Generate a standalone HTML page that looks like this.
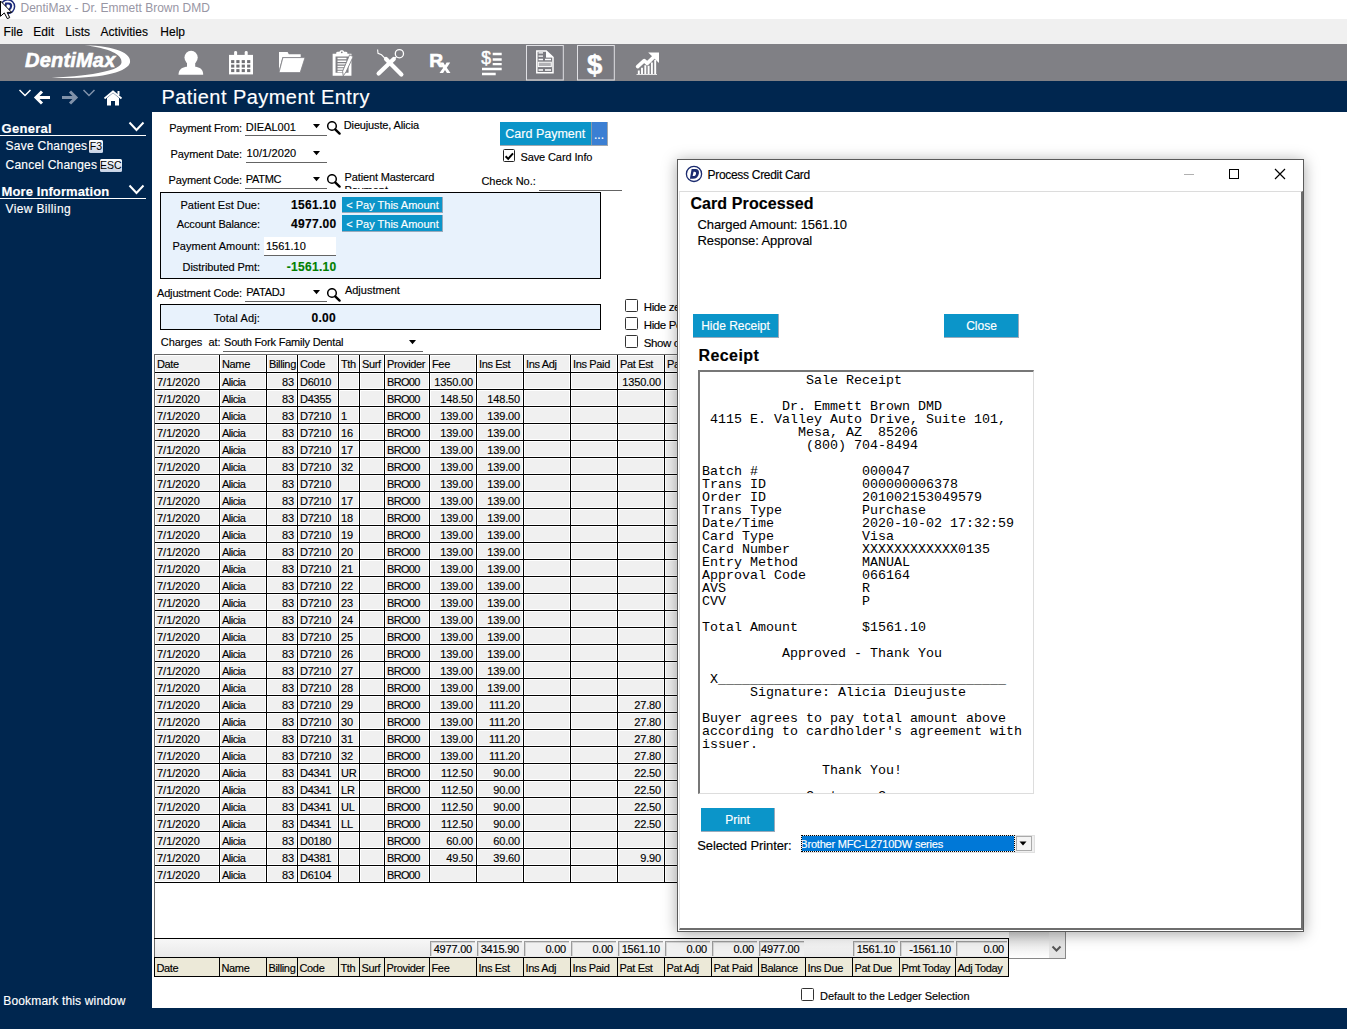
<!DOCTYPE html>
<html><head><meta charset="utf-8"><title>DentiMax</title>
<style>
html,body{margin:0;padding:0}
body{width:1347px;height:1029px;overflow:hidden;position:relative;background:#00264f;font-family:"Liberation Sans",sans-serif}
.r{position:absolute}
.t{position:absolute;white-space:nowrap;-webkit-text-stroke:0.15px currentColor}
.c{position:absolute;background:#f0f0f0;border:1px solid #fff}
.sunk{position:absolute;background:#f0f0f0;border-top:1px solid #9c9c9c;border-left:1px solid #9c9c9c;box-shadow:inset 1px 1px 0 #d4d4d4;box-sizing:border-box}
.badge{font-family:"Liberation Sans",sans-serif;font-size:10.5px;line-height:13px;text-align:center;color:#000;background:linear-gradient(#fdfdfd,#c6d2e6);border-radius:1.5px}
</style></head><body>
<div class="r" style="left:0px;top:0px;width:1347px;height:19px;background:#fff"></div>
<div class="t" style="left:20.5px;top:0.50px;font-size:12px;line-height:15px;color:#9896a4;font-weight:normal;font-family:'Liberation Sans', sans-serif;-webkit-text-stroke:0;">DentiMax - Dr. Emmett Brown DMD</div>
<svg class="r" style="left:0;top:0" width="20" height="20" viewBox="0 0 20 20"><circle cx="7.8" cy="6.6" r="6.8" fill="#fff" stroke="#1c2a7a" stroke-width="1.5"/><path d="M5.2 2.4 h3.6 c2.6 0 3.8 1.8 3.3 4.2 -.5 2.8 -2.4 4.6 -5.2 4.6 H3.4 z M6.9 4.6 L5.8 9.1 h1.4 c1.4 0 2.4-1 2.7-2.4 .3-1.3-.4-2.1-1.7-2.1z" fill="#1c2a7a" fill-rule="evenodd"/><path d="M0.5 1 L0.5 16.3 L4.3 12.9 L7.3 18.6 L9.7 17.6 L7.2 12.4 L11.7 12.4 Z" fill="#fff" stroke="#000" stroke-width="1"/></svg>
<div class="r" style="left:0px;top:19px;width:1347px;height:25px;background:#f0f0f0"></div>
<div class="t" style="left:3.6px;top:24.50px;font-size:12px;line-height:15px;color:#000;font-weight:normal;font-family:'Liberation Sans', sans-serif;">File</div>
<div class="t" style="left:33.3px;top:24.50px;font-size:12px;line-height:15px;color:#000;font-weight:normal;font-family:'Liberation Sans', sans-serif;">Edit</div>
<div class="t" style="left:65.3px;top:24.50px;font-size:12px;line-height:15px;color:#000;font-weight:normal;font-family:'Liberation Sans', sans-serif;">Lists</div>
<div class="t" style="left:100.6px;top:24.50px;font-size:12px;line-height:15px;color:#000;font-weight:normal;font-family:'Liberation Sans', sans-serif;">Activities</div>
<div class="t" style="left:160.3px;top:24.50px;font-size:12px;line-height:15px;color:#000;font-weight:normal;font-family:'Liberation Sans', sans-serif;">Help</div>
<div class="r" style="left:0px;top:44px;width:1347px;height:37px;background:#808085"></div>
<svg class="r" style="left:20px;top:44px" width="120" height="37" viewBox="0 0 120 37"><path d="M64.5 1.2 C 96 2, 112 9.5, 110 18.5 C 108 28, 80 35.5, 31.7 33.8 C 76 31.5, 100.5 26, 101.5 18.5 C 102.5 10.5, 89 4, 64.5 1.2 Z" fill="#fff"/></svg>
<div class="t" style="left:25px;top:47.50px;font-size:20px;line-height:25px;color:#fff;font-weight:bold;font-family:'Liberation Sans', sans-serif;letter-spacing:0.2px;font-style:italic;-webkit-text-stroke:0.6px #fff;">DentiMax</div>
<svg class="r" style="left:0;top:0" width="700" height="85" viewBox="0 0 700 85"><ellipse cx="191.1" cy="57.6" rx="6.6" ry="6.9" fill="#fff"/><rect x="187" y="62" width="8.2" height="5" fill="#fff"/><path d="M178.5 74.7 C178.6 70 181.5 67.6 186 66.8 L196 66.8 C200.5 67.6 203.2 70 203.2 74.7 Z" fill="#fff"/><rect x="229" y="54.9" width="24" height="19.5" fill="#fff"/><rect x="234.1" y="51" width="3" height="5" rx="1.4" fill="#fff"/><rect x="244.7" y="51" width="3" height="5" rx="1.4" fill="#fff"/><rect x="231.1" y="60.1" width="3.2" height="3" fill="#707075"/><rect x="236.3" y="60.1" width="3.2" height="3" fill="#707075"/><rect x="241.7" y="60.1" width="3.2" height="3" fill="#707075"/><rect x="247.1" y="60.1" width="3.2" height="3" fill="#707075"/><rect x="231.1" y="64.6" width="3.2" height="3" fill="#707075"/><rect x="236.3" y="64.6" width="3.2" height="3" fill="#707075"/><rect x="241.7" y="64.6" width="3.2" height="3" fill="#707075"/><rect x="247.1" y="64.6" width="3.2" height="3" fill="#707075"/><rect x="231.1" y="69.1" width="3.2" height="3" fill="#707075"/><rect x="236.3" y="69.1" width="3.2" height="3" fill="#707075"/><rect x="241.7" y="69.1" width="3.2" height="3" fill="#707075"/><rect x="247.1" y="69.1" width="3.2" height="3" fill="#707075"/><path d="M279 52 H287.6 L288.8 54.3 H300.7 V57 H282.5 L279 70 Z" fill="#fff"/><path d="M282.9 57.6 H305 L300.2 72.6 H279 Z" fill="#fff" stroke="#808085" stroke-width="0.8"/><path d="M334.1 55.1 H350 V74.3 H334.1 Z" fill="none" stroke="#fff" stroke-width="2.9"/><path d="M336.2 55.8 V53 C336.2 51.8 337.4 51.8 338.5 51.8 H339.5 C340 50.5 340.8 50.2 341.8 50.2 C342.8 50.2 343.6 50.5 344.1 51.8 H345.2 C346.3 51.8 347.4 51.8 347.4 53 V55.8 Z" fill="#fff"/><circle cx="341.8" cy="52.3" r="0.9" fill="#808085"/><path d="M337.5 58.5 H346.5 M337.5 61.2 H346.5 M337.5 63.9 H346.5 M337.5 66.5 H346 M337.5 69 H344.5 M337.5 71.5 H343" stroke="#fff" stroke-width="1.4"/><path d="M349.6 54.8 L353.2 56.6 L346 72 L343.2 75.8 L342.6 71.2 Z" fill="#fff" stroke="#808085" stroke-width="0.9"/><path d="M378.6 73.6 L393.8 58.9" stroke="#fff" stroke-width="4.2" stroke-linecap="round"/><path d="M393 59.6 L396.6 56.6" stroke="#fff" stroke-width="1.1"/><circle cx="399.4" cy="53.7" r="4.1" fill="none" stroke="#fff" stroke-width="1.3"/><path d="M386 59 L401.4 74.4" stroke="#fff" stroke-width="4.2" stroke-linecap="round"/><path d="M385.6 58.8 L381.5 54.8 L378 53.3 L377.6 49.5" stroke="#fff" stroke-width="1.1" fill="none"/><text x="429.2" y="66.8" font-family="Liberation Sans" font-weight="bold" font-size="19.2" fill="#fff" stroke="#fff" stroke-width="0.6">R</text><path d="M439.8 62.6 H443.4 L445 65.3 L446.6 62.6 H450.2 L446.8 67.8 L450.5 73 H446.9 L445 70.1 L443.1 73 H439.5 L443.2 67.8 Z" fill="#fff"/><text x="481.2" y="64.2" font-family="Liberation Sans" font-size="17.5" fill="#fff" stroke="#fff" stroke-width="0.5">$</text><path d="M492.7 54 H501.7 M492.7 59.5 H501.7 M492.7 64.2 H501.7 M482 69 H501.7 M482 74 H495.7" stroke="#fff" stroke-width="2.3"/><rect x="526.5" y="45.5" width="36.8" height="34.5" fill="#7a7a80" stroke="#e0e0e4" stroke-width="1"/><path d="M536.8 51 H546.2 L553 57.3 V72.7 H536.8 Z" fill="none" stroke="#fff" stroke-width="1.5"/><path d="M546 51 V57.5 H553" fill="#fff"/><path d="M546.2 51 L553 57.3 H546.2 Z" fill="#fff"/><path d="M538.5 52.9 H543 M538.5 56.2 H543 M538.5 59.5 H543 M545 59.5 H551 M538.5 70 H543 M545 70 H551" stroke="#fff" stroke-width="1.3"/><rect x="538.3" y="62.2" width="13" height="4.4" fill="#b0b0b4" stroke="#fff" stroke-width="1"/><rect x="577.5" y="45.5" width="36.8" height="34.5" fill="#7a7a80" stroke="#e0e0e4" stroke-width="1"/><text x="587.1" y="74" font-family="Liberation Sans" font-weight="bold" font-size="27.5" fill="#fff" stroke="#fff" stroke-width="0.5">$</text><path d="M637.6 66.6 L644.2 60.6 L647.2 63.4 L655.5 55.3" stroke="#fff" stroke-width="3.6" fill="none" stroke-linecap="round" stroke-linejoin="round"/><path d="M648.2 52.4 H659 V63 Z" fill="#fff"/><path d="M638.8 74 V70.5 M642 74 V67.8 M645.3 74 V65.3 M648.6 74 V65.8 M651.9 74 V62.6 M655.2 74 V59.8" stroke="#fff" stroke-width="1.9"/><path d="M636.5 74.5 H657" stroke="#fff" stroke-width="0.8"/></svg>
<svg class="r" style="left:0;top:82px" width="152" height="28" viewBox="0 82 152 28"><path d="M19.5 90 L25 95.5 L30.5 90" stroke="#fff" stroke-width="1.5" fill="none"/><path d="M50 97.5 H37 M42 91.5 L36 97.5 L42 103.5" stroke="#fff" stroke-width="3" fill="none"/><path d="M62 97.5 H75 M70 91.5 L76 97.5 L70 103.5" stroke="#8092aa" stroke-width="3" fill="none"/><path d="M83.5 90 L89 95.5 L94.5 90" stroke="#8092aa" stroke-width="1.5" fill="none"/><path d="M104.5 98.5 L113 91.5 L121.5 98.5" stroke="#fff" stroke-width="1.8" fill="none"/><path d="M107 98 L113 93 L119 98 V105.5 H115 V101 H111 V105.5 H107 Z" fill="#fff"/><rect x="117.5" y="91" width="2" height="4" fill="#fff"/></svg>
<div class="t" style="left:161.5px;top:85.20px;font-size:20px;line-height:25px;color:#fff;font-weight:normal;font-family:'Liberation Sans', sans-serif;letter-spacing:0.45px;">Patient Payment Entry</div>
<div class="t" style="left:1.5px;top:120.00px;font-size:13px;line-height:17px;color:#fff;font-weight:bold;font-family:'Liberation Sans', sans-serif;letter-spacing:0.3px;">General</div>
<div class="r" style="left:0px;top:135px;width:146px;height:1.2px;background:#fff"></div>
<svg class="r" style="left:128px;top:120px" width="20" height="14"><path d="M1.5 2.5 L8.5 10 L15.5 2.5" stroke="#fff" stroke-width="2" fill="none"/></svg>
<div class="t" style="left:5.6px;top:138.50px;font-size:12px;line-height:15px;color:#fff;font-weight:normal;font-family:'Liberation Sans', sans-serif;letter-spacing:0.25px;">Save Changes</div>
<div class="r badge" style="left:89px;top:139.5px;width:14px;height:13px">F3</div>
<div class="t" style="left:5.6px;top:157.50px;font-size:12px;line-height:15px;color:#fff;font-weight:normal;font-family:'Liberation Sans', sans-serif;letter-spacing:0.2px;">Cancel Changes</div>
<div class="r badge" style="left:99.5px;top:158.5px;width:22.5px;height:13px">ESC</div>
<div class="t" style="left:1.5px;top:183.00px;font-size:13px;line-height:17px;color:#fff;font-weight:bold;font-family:'Liberation Sans', sans-serif;letter-spacing:0.1px;">More Information</div>
<div class="r" style="left:0px;top:198px;width:146px;height:1.2px;background:#fff"></div>
<svg class="r" style="left:128px;top:183px" width="20" height="14"><path d="M1.5 2.5 L8.5 10 L15.5 2.5" stroke="#fff" stroke-width="2" fill="none"/></svg>
<div class="t" style="left:5.6px;top:201.50px;font-size:12px;line-height:15px;color:#fff;font-weight:normal;font-family:'Liberation Sans', sans-serif;letter-spacing:0.35px;">View Billing</div>
<div class="t" style="left:3.3px;top:993.50px;font-size:12px;line-height:15px;color:#fff;font-weight:normal;font-family:'Liberation Sans', sans-serif;letter-spacing:0.15px;">Bookmark this window</div>
<div class="r" style="left:152px;top:112px;width:1195px;height:896px;background:#fff"></div>
<div class="t" style="right:1105.2px;top:121.00px;font-size:11px;line-height:14px;color:#000;font-weight:normal;font-family:'Liberation Sans', sans-serif;letter-spacing:-0.2px;">Payment From:</div>
<div class="t" style="left:245.8px;top:120.00px;font-size:11px;line-height:14px;color:#000;font-weight:normal;font-family:'Liberation Sans', sans-serif;">DIEAL001</div>
<div class="r" style="left:244.8px;top:135px;width:82.19999999999999px;height:1px;background:#646464"></div>
<svg class="r" style="left:313px;top:124px" width="8" height="5"><path d="M0 0 H7 L3.5 4.2 Z" fill="#000"/></svg>
<svg class="r" style="left:327px;top:121px" width="15" height="15"><circle cx="5" cy="5" r="4.3" fill="none" stroke="#000" stroke-width="1.5"/><path d="M8.2 8.4 L12.6 12.6" stroke="#000" stroke-width="2.4" stroke-linecap="round"/></svg>
<div class="t" style="left:343.8px;top:118.00px;font-size:11px;line-height:14px;color:#000;font-weight:normal;font-family:'Liberation Sans', sans-serif;letter-spacing:-0.15px;">Dieujuste, Alicia</div>
<div class="t" style="right:1105px;top:147.00px;font-size:11px;line-height:14px;color:#000;font-weight:normal;font-family:'Liberation Sans', sans-serif;letter-spacing:-0.1px;">Payment Date:</div>
<div class="t" style="left:246.5px;top:146.00px;font-size:11px;line-height:14px;color:#000;font-weight:normal;font-family:'Liberation Sans', sans-serif;letter-spacing:0.1px;">10/1/2020</div>
<div class="r" style="left:245.5px;top:161.5px;width:81.5px;height:1px;background:#646464"></div>
<svg class="r" style="left:313px;top:151px" width="8" height="5"><path d="M0 0 H7 L3.5 4.2 Z" fill="#000"/></svg>
<div class="t" style="right:1105.2px;top:173.00px;font-size:11px;line-height:14px;color:#000;font-weight:normal;font-family:'Liberation Sans', sans-serif;letter-spacing:-0.2px;">Payment Code:</div>
<div class="t" style="left:245.8px;top:172.00px;font-size:11px;line-height:14px;color:#000;font-weight:normal;font-family:'Liberation Sans', sans-serif;letter-spacing:-0.3px;">PATMC</div>
<div class="r" style="left:244.8px;top:187.5px;width:82.19999999999999px;height:1px;background:#646464"></div>
<svg class="r" style="left:313px;top:177px" width="8" height="5"><path d="M0 0 H7 L3.5 4.2 Z" fill="#000"/></svg>
<svg class="r" style="left:327px;top:174px" width="15" height="15"><circle cx="5" cy="5" r="4.3" fill="none" stroke="#000" stroke-width="1.5"/><path d="M8.2 8.4 L12.6 12.6" stroke="#000" stroke-width="2.4" stroke-linecap="round"/></svg>
<div class="r" style="left:344px;top:170px;width:120px;height:18.6px;overflow:hidden">
<div class="t" style="left:0.6px;top:-0.50px;font-size:11px;line-height:14px;color:#000;font-weight:normal;font-family:'Liberation Sans', sans-serif;letter-spacing:-0.15px;">Patient Mastercard</div>
<div class="t" style="left:0.6px;top:12.80px;font-size:11px;line-height:14px;color:#000;font-weight:normal;font-family:'Liberation Sans', sans-serif;">Payment</div>
</div>
<div class="r" style="left:499.7px;top:122px;width:91.3px;height:23.4px;background:#0b95c9"></div>
<div class="r" style="left:591px;top:122px;width:16.3px;height:23.4px;background:#3b7fd3"></div>
<div class="t" style="left:545.3px;transform:translateX(-50%);top:125.80px;font-size:12.5px;line-height:16px;color:#fff;font-weight:normal;font-family:'Liberation Sans', sans-serif;">Card Payment</div>
<div class="r" style="left:591px;top:122px;width:1px;height:23.4px;background:#8a9aa8"></div>
<div class="r" style="left:499.7px;top:145px;width:108px;height:1px;background:#a0a8b0"></div>
<div class="r" style="left:607px;top:122px;width:1px;height:24px;background:#a0a8b0"></div>
<div class="t" style="left:599px;transform:translateX(-50%);top:127.50px;font-size:12px;line-height:15px;color:#fff;font-weight:normal;font-family:'Liberation Sans', sans-serif;">...</div>
<div class="r" style="left:502.5px;top:149.3px;width:10.6px;height:10.6px;border:1.3px solid #222;border-radius:1.5px;background:#fff"></div>
<svg class="r" style="left:503px;top:150px" width="12" height="12"><path d="M2.6 6.3 L5.2 8.9 L10 3.4" stroke="#000" stroke-width="2" fill="none"/></svg>
<div class="t" style="left:520.4px;top:150.00px;font-size:11px;line-height:14px;color:#000;font-weight:normal;font-family:'Liberation Sans', sans-serif;letter-spacing:-0.1px;">Save Card Info</div>
<div class="t" style="left:481.4px;top:173.50px;font-size:11px;line-height:14px;color:#000;font-weight:normal;font-family:'Liberation Sans', sans-serif;">Check No.:</div>
<div class="r" style="left:539.4px;top:190px;width:82.4px;height:1px;background:#646464"></div>
<div class="r" style="left:160px;top:192px;width:439px;height:85px;border:1px solid #000;background:#e8f2fc"></div>
<div class="t" style="right:1087px;top:198.00px;font-size:11px;line-height:14px;color:#000;font-weight:normal;font-family:'Liberation Sans', sans-serif;letter-spacing:0px;">Patient Est Due:</div>
<div class="t" style="right:1087px;top:217.00px;font-size:11px;line-height:14px;color:#000;font-weight:normal;font-family:'Liberation Sans', sans-serif;letter-spacing:-0.15px;">Account Balance:</div>
<div class="t" style="right:1087px;top:239.00px;font-size:11px;line-height:14px;color:#000;font-weight:normal;font-family:'Liberation Sans', sans-serif;letter-spacing:0.05px;">Payment Amount:</div>
<div class="t" style="right:1087px;top:260.00px;font-size:11px;line-height:14px;color:#000;font-weight:normal;font-family:'Liberation Sans', sans-serif;letter-spacing:-0.05px;">Distributed Pmt:</div>
<div class="t" style="right:1010.5px;top:198.00px;font-size:12px;line-height:15px;color:#000;font-weight:bold;font-family:'Liberation Sans', sans-serif;letter-spacing:0.3px;">1561.10</div>
<div class="t" style="right:1010.5px;top:217.00px;font-size:12px;line-height:15px;color:#000;font-weight:bold;font-family:'Liberation Sans', sans-serif;letter-spacing:0.3px;">4977.00</div>
<div class="t" style="right:1010.5px;top:260.00px;font-size:12px;line-height:15px;color:#008000;font-weight:bold;font-family:'Liberation Sans', sans-serif;letter-spacing:0.3px;">-1561.10</div>
<div class="r" style="left:264px;top:237.3px;width:71.8px;height:18.5px;background:#fff;border-bottom:1px solid #646464;box-sizing:border-box"></div>
<div class="t" style="left:266px;top:239.00px;font-size:11px;line-height:14px;color:#000;font-weight:normal;font-family:'Liberation Sans', sans-serif;">1561.10</div>
<div class="r" style="left:341.6px;top:196.6px;width:101.8px;height:16.5px;background:#0b95c9;border-right:1px solid #9ab;border-bottom:1px solid #9ab;box-sizing:border-box"></div>
<div class="t" style="left:392.5px;transform:translateX(-50%);top:198.10px;font-size:11px;line-height:14px;color:#fff;font-weight:normal;font-family:'Liberation Sans', sans-serif;">&lt; Pay This Amount</div>
<div class="r" style="left:341.6px;top:215px;width:101.8px;height:16.5px;background:#0b95c9;border-right:1px solid #9ab;border-bottom:1px solid #9ab;box-sizing:border-box"></div>
<div class="t" style="left:392.5px;transform:translateX(-50%);top:216.50px;font-size:11px;line-height:14px;color:#fff;font-weight:normal;font-family:'Liberation Sans', sans-serif;">&lt; Pay This Amount</div>
<div class="t" style="right:1105px;top:285.50px;font-size:11px;line-height:14px;color:#000;font-weight:normal;font-family:'Liberation Sans', sans-serif;letter-spacing:-0.15px;">Adjustment Code:</div>
<div class="t" style="left:246.3px;top:284.50px;font-size:11px;line-height:14px;color:#000;font-weight:normal;font-family:'Liberation Sans', sans-serif;letter-spacing:-0.2px;">PATADJ</div>
<div class="r" style="left:245.3px;top:300.5px;width:81.69999999999999px;height:1px;background:#646464"></div>
<svg class="r" style="left:312.6px;top:290px" width="8" height="5"><path d="M0 0 H7 L3.5 4.2 Z" fill="#000"/></svg>
<svg class="r" style="left:327px;top:288px" width="15" height="15"><circle cx="5" cy="5" r="4.3" fill="none" stroke="#000" stroke-width="1.5"/><path d="M8.2 8.4 L12.6 12.6" stroke="#000" stroke-width="2.4" stroke-linecap="round"/></svg>
<div class="t" style="left:344.9px;top:283.00px;font-size:11px;line-height:14px;color:#000;font-weight:normal;font-family:'Liberation Sans', sans-serif;">Adjustment</div>
<div class="r" style="left:160px;top:304px;width:439px;height:24px;border:1px solid #000;background:#e8f2fc"></div>
<div class="t" style="right:1087px;top:310.50px;font-size:11px;line-height:14px;color:#000;font-weight:normal;font-family:'Liberation Sans', sans-serif;letter-spacing:0.15px;">Total Adj:</div>
<div class="t" style="right:1011px;top:310.50px;font-size:12px;line-height:15px;color:#000;font-weight:bold;font-family:'Liberation Sans', sans-serif;letter-spacing:0.3px;">0.00</div>
<div class="t" style="left:160.7px;top:334.50px;font-size:11px;line-height:14px;color:#000;font-weight:normal;font-family:'Liberation Sans', sans-serif;">Charges&nbsp; at:</div>
<div class="t" style="left:224px;top:334.50px;font-size:11px;line-height:14px;color:#000;font-weight:normal;font-family:'Liberation Sans', sans-serif;letter-spacing:-0.2px;">South Fork Family Dental</div>
<div class="r" style="left:223px;top:351px;width:199.8px;height:1px;background:#646464"></div>
<svg class="r" style="left:409px;top:340px" width="8" height="5"><path d="M0 0 H7 L3.5 4.2 Z" fill="#000"/></svg>
<div class="r" style="left:625.2px;top:299.3px;width:10.6px;height:10.6px;border:1.3px solid #333;border-radius:1.5px;background:#fff"></div>
<div class="t" style="left:643.8px;top:299.80px;font-size:11.5px;line-height:15px;color:#000;font-weight:normal;font-family:'Liberation Sans', sans-serif;letter-spacing:-0.4px;">Hide zero</div>
<div class="r" style="left:625.2px;top:317.3px;width:10.6px;height:10.6px;border:1.3px solid #333;border-radius:1.5px;background:#fff"></div>
<div class="t" style="left:643.8px;top:317.80px;font-size:11.5px;line-height:15px;color:#000;font-weight:normal;font-family:'Liberation Sans', sans-serif;letter-spacing:-0.4px;">Hide Pe</div>
<div class="r" style="left:625.2px;top:335.3px;width:10.6px;height:10.6px;border:1.3px solid #333;border-radius:1.5px;background:#fff"></div>
<div class="t" style="left:643.8px;top:335.80px;font-size:11.5px;line-height:15px;color:#000;font-weight:normal;font-family:'Liberation Sans', sans-serif;letter-spacing:-0.4px;">Show o</div>
<div class="r" style="left:154px;top:354px;width:895px;height:585px;background:#fff;border-left:1px solid #6a6a6a;border-top:1px solid #6a6a6a;box-sizing:border-box"></div>
<div class="r" style="left:154px;top:354px;width:855px;height:529px;background:#000"></div>
<div class="r" style="left:154px;top:354px;width:855px;height:1px;background:#6a6a6a"></div>
<div class="r" style="left:154px;top:354px;width:1px;height:529px;background:#6a6a6a"></div>
<div class="c" style="left:155px;top:355px;width:62px;height:15px"></div><div class="c" style="left:220px;top:355px;width:44px;height:15px"></div><div class="c" style="left:267px;top:355px;width:28px;height:15px"></div><div class="c" style="left:298px;top:355px;width:38px;height:15px"></div><div class="c" style="left:339px;top:355px;width:18px;height:15px"></div><div class="c" style="left:360px;top:355px;width:22px;height:15px"></div><div class="c" style="left:385px;top:355px;width:42px;height:15px"></div><div class="c" style="left:430px;top:355px;width:44px;height:15px"></div><div class="c" style="left:477px;top:355px;width:44px;height:15px"></div><div class="c" style="left:524px;top:355px;width:44px;height:15px"></div><div class="c" style="left:571px;top:355px;width:44px;height:15px"></div><div class="c" style="left:618px;top:355px;width:44px;height:15px"></div><div class="c" style="left:665px;top:355px;width:44px;height:15px"></div><div class="c" style="left:712px;top:355px;width:44px;height:15px"></div><div class="c" style="left:759px;top:355px;width:44px;height:15px"></div><div class="c" style="left:806px;top:355px;width:44px;height:15px"></div><div class="c" style="left:853px;top:355px;width:44px;height:15px"></div><div class="c" style="left:900px;top:355px;width:53px;height:15px"></div><div class="c" style="left:956px;top:355px;width:50px;height:15px"></div>
<div class="c" style="left:155px;top:373px;width:62px;height:14px"></div><div class="c" style="left:220px;top:373px;width:44px;height:14px"></div><div class="c" style="left:267px;top:373px;width:28px;height:14px"></div><div class="c" style="left:298px;top:373px;width:38px;height:14px"></div><div class="c" style="left:339px;top:373px;width:18px;height:14px"></div><div class="c" style="left:360px;top:373px;width:22px;height:14px"></div><div class="c" style="left:385px;top:373px;width:42px;height:14px"></div><div class="c" style="left:430px;top:373px;width:44px;height:14px"></div><div class="c" style="left:477px;top:373px;width:44px;height:14px"></div><div class="c" style="left:524px;top:373px;width:44px;height:14px"></div><div class="c" style="left:571px;top:373px;width:44px;height:14px"></div><div class="c" style="left:618px;top:373px;width:44px;height:14px"></div><div class="c" style="left:665px;top:373px;width:44px;height:14px"></div><div class="c" style="left:712px;top:373px;width:44px;height:14px"></div><div class="c" style="left:759px;top:373px;width:44px;height:14px"></div><div class="c" style="left:806px;top:373px;width:44px;height:14px"></div><div class="c" style="left:853px;top:373px;width:44px;height:14px"></div><div class="c" style="left:900px;top:373px;width:53px;height:14px"></div><div class="c" style="left:956px;top:373px;width:50px;height:14px"></div>
<div class="c" style="left:155px;top:390px;width:62px;height:14px"></div><div class="c" style="left:220px;top:390px;width:44px;height:14px"></div><div class="c" style="left:267px;top:390px;width:28px;height:14px"></div><div class="c" style="left:298px;top:390px;width:38px;height:14px"></div><div class="c" style="left:339px;top:390px;width:18px;height:14px"></div><div class="c" style="left:360px;top:390px;width:22px;height:14px"></div><div class="c" style="left:385px;top:390px;width:42px;height:14px"></div><div class="c" style="left:430px;top:390px;width:44px;height:14px"></div><div class="c" style="left:477px;top:390px;width:44px;height:14px"></div><div class="c" style="left:524px;top:390px;width:44px;height:14px"></div><div class="c" style="left:571px;top:390px;width:44px;height:14px"></div><div class="c" style="left:618px;top:390px;width:44px;height:14px"></div><div class="c" style="left:665px;top:390px;width:44px;height:14px"></div><div class="c" style="left:712px;top:390px;width:44px;height:14px"></div><div class="c" style="left:759px;top:390px;width:44px;height:14px"></div><div class="c" style="left:806px;top:390px;width:44px;height:14px"></div><div class="c" style="left:853px;top:390px;width:44px;height:14px"></div><div class="c" style="left:900px;top:390px;width:53px;height:14px"></div><div class="c" style="left:956px;top:390px;width:50px;height:14px"></div>
<div class="c" style="left:155px;top:407px;width:62px;height:14px"></div><div class="c" style="left:220px;top:407px;width:44px;height:14px"></div><div class="c" style="left:267px;top:407px;width:28px;height:14px"></div><div class="c" style="left:298px;top:407px;width:38px;height:14px"></div><div class="c" style="left:339px;top:407px;width:18px;height:14px"></div><div class="c" style="left:360px;top:407px;width:22px;height:14px"></div><div class="c" style="left:385px;top:407px;width:42px;height:14px"></div><div class="c" style="left:430px;top:407px;width:44px;height:14px"></div><div class="c" style="left:477px;top:407px;width:44px;height:14px"></div><div class="c" style="left:524px;top:407px;width:44px;height:14px"></div><div class="c" style="left:571px;top:407px;width:44px;height:14px"></div><div class="c" style="left:618px;top:407px;width:44px;height:14px"></div><div class="c" style="left:665px;top:407px;width:44px;height:14px"></div><div class="c" style="left:712px;top:407px;width:44px;height:14px"></div><div class="c" style="left:759px;top:407px;width:44px;height:14px"></div><div class="c" style="left:806px;top:407px;width:44px;height:14px"></div><div class="c" style="left:853px;top:407px;width:44px;height:14px"></div><div class="c" style="left:900px;top:407px;width:53px;height:14px"></div><div class="c" style="left:956px;top:407px;width:50px;height:14px"></div>
<div class="c" style="left:155px;top:424px;width:62px;height:14px"></div><div class="c" style="left:220px;top:424px;width:44px;height:14px"></div><div class="c" style="left:267px;top:424px;width:28px;height:14px"></div><div class="c" style="left:298px;top:424px;width:38px;height:14px"></div><div class="c" style="left:339px;top:424px;width:18px;height:14px"></div><div class="c" style="left:360px;top:424px;width:22px;height:14px"></div><div class="c" style="left:385px;top:424px;width:42px;height:14px"></div><div class="c" style="left:430px;top:424px;width:44px;height:14px"></div><div class="c" style="left:477px;top:424px;width:44px;height:14px"></div><div class="c" style="left:524px;top:424px;width:44px;height:14px"></div><div class="c" style="left:571px;top:424px;width:44px;height:14px"></div><div class="c" style="left:618px;top:424px;width:44px;height:14px"></div><div class="c" style="left:665px;top:424px;width:44px;height:14px"></div><div class="c" style="left:712px;top:424px;width:44px;height:14px"></div><div class="c" style="left:759px;top:424px;width:44px;height:14px"></div><div class="c" style="left:806px;top:424px;width:44px;height:14px"></div><div class="c" style="left:853px;top:424px;width:44px;height:14px"></div><div class="c" style="left:900px;top:424px;width:53px;height:14px"></div><div class="c" style="left:956px;top:424px;width:50px;height:14px"></div>
<div class="c" style="left:155px;top:441px;width:62px;height:14px"></div><div class="c" style="left:220px;top:441px;width:44px;height:14px"></div><div class="c" style="left:267px;top:441px;width:28px;height:14px"></div><div class="c" style="left:298px;top:441px;width:38px;height:14px"></div><div class="c" style="left:339px;top:441px;width:18px;height:14px"></div><div class="c" style="left:360px;top:441px;width:22px;height:14px"></div><div class="c" style="left:385px;top:441px;width:42px;height:14px"></div><div class="c" style="left:430px;top:441px;width:44px;height:14px"></div><div class="c" style="left:477px;top:441px;width:44px;height:14px"></div><div class="c" style="left:524px;top:441px;width:44px;height:14px"></div><div class="c" style="left:571px;top:441px;width:44px;height:14px"></div><div class="c" style="left:618px;top:441px;width:44px;height:14px"></div><div class="c" style="left:665px;top:441px;width:44px;height:14px"></div><div class="c" style="left:712px;top:441px;width:44px;height:14px"></div><div class="c" style="left:759px;top:441px;width:44px;height:14px"></div><div class="c" style="left:806px;top:441px;width:44px;height:14px"></div><div class="c" style="left:853px;top:441px;width:44px;height:14px"></div><div class="c" style="left:900px;top:441px;width:53px;height:14px"></div><div class="c" style="left:956px;top:441px;width:50px;height:14px"></div>
<div class="c" style="left:155px;top:458px;width:62px;height:14px"></div><div class="c" style="left:220px;top:458px;width:44px;height:14px"></div><div class="c" style="left:267px;top:458px;width:28px;height:14px"></div><div class="c" style="left:298px;top:458px;width:38px;height:14px"></div><div class="c" style="left:339px;top:458px;width:18px;height:14px"></div><div class="c" style="left:360px;top:458px;width:22px;height:14px"></div><div class="c" style="left:385px;top:458px;width:42px;height:14px"></div><div class="c" style="left:430px;top:458px;width:44px;height:14px"></div><div class="c" style="left:477px;top:458px;width:44px;height:14px"></div><div class="c" style="left:524px;top:458px;width:44px;height:14px"></div><div class="c" style="left:571px;top:458px;width:44px;height:14px"></div><div class="c" style="left:618px;top:458px;width:44px;height:14px"></div><div class="c" style="left:665px;top:458px;width:44px;height:14px"></div><div class="c" style="left:712px;top:458px;width:44px;height:14px"></div><div class="c" style="left:759px;top:458px;width:44px;height:14px"></div><div class="c" style="left:806px;top:458px;width:44px;height:14px"></div><div class="c" style="left:853px;top:458px;width:44px;height:14px"></div><div class="c" style="left:900px;top:458px;width:53px;height:14px"></div><div class="c" style="left:956px;top:458px;width:50px;height:14px"></div>
<div class="c" style="left:155px;top:475px;width:62px;height:14px"></div><div class="c" style="left:220px;top:475px;width:44px;height:14px"></div><div class="c" style="left:267px;top:475px;width:28px;height:14px"></div><div class="c" style="left:298px;top:475px;width:38px;height:14px"></div><div class="c" style="left:339px;top:475px;width:18px;height:14px"></div><div class="c" style="left:360px;top:475px;width:22px;height:14px"></div><div class="c" style="left:385px;top:475px;width:42px;height:14px"></div><div class="c" style="left:430px;top:475px;width:44px;height:14px"></div><div class="c" style="left:477px;top:475px;width:44px;height:14px"></div><div class="c" style="left:524px;top:475px;width:44px;height:14px"></div><div class="c" style="left:571px;top:475px;width:44px;height:14px"></div><div class="c" style="left:618px;top:475px;width:44px;height:14px"></div><div class="c" style="left:665px;top:475px;width:44px;height:14px"></div><div class="c" style="left:712px;top:475px;width:44px;height:14px"></div><div class="c" style="left:759px;top:475px;width:44px;height:14px"></div><div class="c" style="left:806px;top:475px;width:44px;height:14px"></div><div class="c" style="left:853px;top:475px;width:44px;height:14px"></div><div class="c" style="left:900px;top:475px;width:53px;height:14px"></div><div class="c" style="left:956px;top:475px;width:50px;height:14px"></div>
<div class="c" style="left:155px;top:492px;width:62px;height:14px"></div><div class="c" style="left:220px;top:492px;width:44px;height:14px"></div><div class="c" style="left:267px;top:492px;width:28px;height:14px"></div><div class="c" style="left:298px;top:492px;width:38px;height:14px"></div><div class="c" style="left:339px;top:492px;width:18px;height:14px"></div><div class="c" style="left:360px;top:492px;width:22px;height:14px"></div><div class="c" style="left:385px;top:492px;width:42px;height:14px"></div><div class="c" style="left:430px;top:492px;width:44px;height:14px"></div><div class="c" style="left:477px;top:492px;width:44px;height:14px"></div><div class="c" style="left:524px;top:492px;width:44px;height:14px"></div><div class="c" style="left:571px;top:492px;width:44px;height:14px"></div><div class="c" style="left:618px;top:492px;width:44px;height:14px"></div><div class="c" style="left:665px;top:492px;width:44px;height:14px"></div><div class="c" style="left:712px;top:492px;width:44px;height:14px"></div><div class="c" style="left:759px;top:492px;width:44px;height:14px"></div><div class="c" style="left:806px;top:492px;width:44px;height:14px"></div><div class="c" style="left:853px;top:492px;width:44px;height:14px"></div><div class="c" style="left:900px;top:492px;width:53px;height:14px"></div><div class="c" style="left:956px;top:492px;width:50px;height:14px"></div>
<div class="c" style="left:155px;top:509px;width:62px;height:14px"></div><div class="c" style="left:220px;top:509px;width:44px;height:14px"></div><div class="c" style="left:267px;top:509px;width:28px;height:14px"></div><div class="c" style="left:298px;top:509px;width:38px;height:14px"></div><div class="c" style="left:339px;top:509px;width:18px;height:14px"></div><div class="c" style="left:360px;top:509px;width:22px;height:14px"></div><div class="c" style="left:385px;top:509px;width:42px;height:14px"></div><div class="c" style="left:430px;top:509px;width:44px;height:14px"></div><div class="c" style="left:477px;top:509px;width:44px;height:14px"></div><div class="c" style="left:524px;top:509px;width:44px;height:14px"></div><div class="c" style="left:571px;top:509px;width:44px;height:14px"></div><div class="c" style="left:618px;top:509px;width:44px;height:14px"></div><div class="c" style="left:665px;top:509px;width:44px;height:14px"></div><div class="c" style="left:712px;top:509px;width:44px;height:14px"></div><div class="c" style="left:759px;top:509px;width:44px;height:14px"></div><div class="c" style="left:806px;top:509px;width:44px;height:14px"></div><div class="c" style="left:853px;top:509px;width:44px;height:14px"></div><div class="c" style="left:900px;top:509px;width:53px;height:14px"></div><div class="c" style="left:956px;top:509px;width:50px;height:14px"></div>
<div class="c" style="left:155px;top:526px;width:62px;height:14px"></div><div class="c" style="left:220px;top:526px;width:44px;height:14px"></div><div class="c" style="left:267px;top:526px;width:28px;height:14px"></div><div class="c" style="left:298px;top:526px;width:38px;height:14px"></div><div class="c" style="left:339px;top:526px;width:18px;height:14px"></div><div class="c" style="left:360px;top:526px;width:22px;height:14px"></div><div class="c" style="left:385px;top:526px;width:42px;height:14px"></div><div class="c" style="left:430px;top:526px;width:44px;height:14px"></div><div class="c" style="left:477px;top:526px;width:44px;height:14px"></div><div class="c" style="left:524px;top:526px;width:44px;height:14px"></div><div class="c" style="left:571px;top:526px;width:44px;height:14px"></div><div class="c" style="left:618px;top:526px;width:44px;height:14px"></div><div class="c" style="left:665px;top:526px;width:44px;height:14px"></div><div class="c" style="left:712px;top:526px;width:44px;height:14px"></div><div class="c" style="left:759px;top:526px;width:44px;height:14px"></div><div class="c" style="left:806px;top:526px;width:44px;height:14px"></div><div class="c" style="left:853px;top:526px;width:44px;height:14px"></div><div class="c" style="left:900px;top:526px;width:53px;height:14px"></div><div class="c" style="left:956px;top:526px;width:50px;height:14px"></div>
<div class="c" style="left:155px;top:543px;width:62px;height:14px"></div><div class="c" style="left:220px;top:543px;width:44px;height:14px"></div><div class="c" style="left:267px;top:543px;width:28px;height:14px"></div><div class="c" style="left:298px;top:543px;width:38px;height:14px"></div><div class="c" style="left:339px;top:543px;width:18px;height:14px"></div><div class="c" style="left:360px;top:543px;width:22px;height:14px"></div><div class="c" style="left:385px;top:543px;width:42px;height:14px"></div><div class="c" style="left:430px;top:543px;width:44px;height:14px"></div><div class="c" style="left:477px;top:543px;width:44px;height:14px"></div><div class="c" style="left:524px;top:543px;width:44px;height:14px"></div><div class="c" style="left:571px;top:543px;width:44px;height:14px"></div><div class="c" style="left:618px;top:543px;width:44px;height:14px"></div><div class="c" style="left:665px;top:543px;width:44px;height:14px"></div><div class="c" style="left:712px;top:543px;width:44px;height:14px"></div><div class="c" style="left:759px;top:543px;width:44px;height:14px"></div><div class="c" style="left:806px;top:543px;width:44px;height:14px"></div><div class="c" style="left:853px;top:543px;width:44px;height:14px"></div><div class="c" style="left:900px;top:543px;width:53px;height:14px"></div><div class="c" style="left:956px;top:543px;width:50px;height:14px"></div>
<div class="c" style="left:155px;top:560px;width:62px;height:14px"></div><div class="c" style="left:220px;top:560px;width:44px;height:14px"></div><div class="c" style="left:267px;top:560px;width:28px;height:14px"></div><div class="c" style="left:298px;top:560px;width:38px;height:14px"></div><div class="c" style="left:339px;top:560px;width:18px;height:14px"></div><div class="c" style="left:360px;top:560px;width:22px;height:14px"></div><div class="c" style="left:385px;top:560px;width:42px;height:14px"></div><div class="c" style="left:430px;top:560px;width:44px;height:14px"></div><div class="c" style="left:477px;top:560px;width:44px;height:14px"></div><div class="c" style="left:524px;top:560px;width:44px;height:14px"></div><div class="c" style="left:571px;top:560px;width:44px;height:14px"></div><div class="c" style="left:618px;top:560px;width:44px;height:14px"></div><div class="c" style="left:665px;top:560px;width:44px;height:14px"></div><div class="c" style="left:712px;top:560px;width:44px;height:14px"></div><div class="c" style="left:759px;top:560px;width:44px;height:14px"></div><div class="c" style="left:806px;top:560px;width:44px;height:14px"></div><div class="c" style="left:853px;top:560px;width:44px;height:14px"></div><div class="c" style="left:900px;top:560px;width:53px;height:14px"></div><div class="c" style="left:956px;top:560px;width:50px;height:14px"></div>
<div class="c" style="left:155px;top:577px;width:62px;height:14px"></div><div class="c" style="left:220px;top:577px;width:44px;height:14px"></div><div class="c" style="left:267px;top:577px;width:28px;height:14px"></div><div class="c" style="left:298px;top:577px;width:38px;height:14px"></div><div class="c" style="left:339px;top:577px;width:18px;height:14px"></div><div class="c" style="left:360px;top:577px;width:22px;height:14px"></div><div class="c" style="left:385px;top:577px;width:42px;height:14px"></div><div class="c" style="left:430px;top:577px;width:44px;height:14px"></div><div class="c" style="left:477px;top:577px;width:44px;height:14px"></div><div class="c" style="left:524px;top:577px;width:44px;height:14px"></div><div class="c" style="left:571px;top:577px;width:44px;height:14px"></div><div class="c" style="left:618px;top:577px;width:44px;height:14px"></div><div class="c" style="left:665px;top:577px;width:44px;height:14px"></div><div class="c" style="left:712px;top:577px;width:44px;height:14px"></div><div class="c" style="left:759px;top:577px;width:44px;height:14px"></div><div class="c" style="left:806px;top:577px;width:44px;height:14px"></div><div class="c" style="left:853px;top:577px;width:44px;height:14px"></div><div class="c" style="left:900px;top:577px;width:53px;height:14px"></div><div class="c" style="left:956px;top:577px;width:50px;height:14px"></div>
<div class="c" style="left:155px;top:594px;width:62px;height:14px"></div><div class="c" style="left:220px;top:594px;width:44px;height:14px"></div><div class="c" style="left:267px;top:594px;width:28px;height:14px"></div><div class="c" style="left:298px;top:594px;width:38px;height:14px"></div><div class="c" style="left:339px;top:594px;width:18px;height:14px"></div><div class="c" style="left:360px;top:594px;width:22px;height:14px"></div><div class="c" style="left:385px;top:594px;width:42px;height:14px"></div><div class="c" style="left:430px;top:594px;width:44px;height:14px"></div><div class="c" style="left:477px;top:594px;width:44px;height:14px"></div><div class="c" style="left:524px;top:594px;width:44px;height:14px"></div><div class="c" style="left:571px;top:594px;width:44px;height:14px"></div><div class="c" style="left:618px;top:594px;width:44px;height:14px"></div><div class="c" style="left:665px;top:594px;width:44px;height:14px"></div><div class="c" style="left:712px;top:594px;width:44px;height:14px"></div><div class="c" style="left:759px;top:594px;width:44px;height:14px"></div><div class="c" style="left:806px;top:594px;width:44px;height:14px"></div><div class="c" style="left:853px;top:594px;width:44px;height:14px"></div><div class="c" style="left:900px;top:594px;width:53px;height:14px"></div><div class="c" style="left:956px;top:594px;width:50px;height:14px"></div>
<div class="c" style="left:155px;top:611px;width:62px;height:14px"></div><div class="c" style="left:220px;top:611px;width:44px;height:14px"></div><div class="c" style="left:267px;top:611px;width:28px;height:14px"></div><div class="c" style="left:298px;top:611px;width:38px;height:14px"></div><div class="c" style="left:339px;top:611px;width:18px;height:14px"></div><div class="c" style="left:360px;top:611px;width:22px;height:14px"></div><div class="c" style="left:385px;top:611px;width:42px;height:14px"></div><div class="c" style="left:430px;top:611px;width:44px;height:14px"></div><div class="c" style="left:477px;top:611px;width:44px;height:14px"></div><div class="c" style="left:524px;top:611px;width:44px;height:14px"></div><div class="c" style="left:571px;top:611px;width:44px;height:14px"></div><div class="c" style="left:618px;top:611px;width:44px;height:14px"></div><div class="c" style="left:665px;top:611px;width:44px;height:14px"></div><div class="c" style="left:712px;top:611px;width:44px;height:14px"></div><div class="c" style="left:759px;top:611px;width:44px;height:14px"></div><div class="c" style="left:806px;top:611px;width:44px;height:14px"></div><div class="c" style="left:853px;top:611px;width:44px;height:14px"></div><div class="c" style="left:900px;top:611px;width:53px;height:14px"></div><div class="c" style="left:956px;top:611px;width:50px;height:14px"></div>
<div class="c" style="left:155px;top:628px;width:62px;height:14px"></div><div class="c" style="left:220px;top:628px;width:44px;height:14px"></div><div class="c" style="left:267px;top:628px;width:28px;height:14px"></div><div class="c" style="left:298px;top:628px;width:38px;height:14px"></div><div class="c" style="left:339px;top:628px;width:18px;height:14px"></div><div class="c" style="left:360px;top:628px;width:22px;height:14px"></div><div class="c" style="left:385px;top:628px;width:42px;height:14px"></div><div class="c" style="left:430px;top:628px;width:44px;height:14px"></div><div class="c" style="left:477px;top:628px;width:44px;height:14px"></div><div class="c" style="left:524px;top:628px;width:44px;height:14px"></div><div class="c" style="left:571px;top:628px;width:44px;height:14px"></div><div class="c" style="left:618px;top:628px;width:44px;height:14px"></div><div class="c" style="left:665px;top:628px;width:44px;height:14px"></div><div class="c" style="left:712px;top:628px;width:44px;height:14px"></div><div class="c" style="left:759px;top:628px;width:44px;height:14px"></div><div class="c" style="left:806px;top:628px;width:44px;height:14px"></div><div class="c" style="left:853px;top:628px;width:44px;height:14px"></div><div class="c" style="left:900px;top:628px;width:53px;height:14px"></div><div class="c" style="left:956px;top:628px;width:50px;height:14px"></div>
<div class="c" style="left:155px;top:645px;width:62px;height:14px"></div><div class="c" style="left:220px;top:645px;width:44px;height:14px"></div><div class="c" style="left:267px;top:645px;width:28px;height:14px"></div><div class="c" style="left:298px;top:645px;width:38px;height:14px"></div><div class="c" style="left:339px;top:645px;width:18px;height:14px"></div><div class="c" style="left:360px;top:645px;width:22px;height:14px"></div><div class="c" style="left:385px;top:645px;width:42px;height:14px"></div><div class="c" style="left:430px;top:645px;width:44px;height:14px"></div><div class="c" style="left:477px;top:645px;width:44px;height:14px"></div><div class="c" style="left:524px;top:645px;width:44px;height:14px"></div><div class="c" style="left:571px;top:645px;width:44px;height:14px"></div><div class="c" style="left:618px;top:645px;width:44px;height:14px"></div><div class="c" style="left:665px;top:645px;width:44px;height:14px"></div><div class="c" style="left:712px;top:645px;width:44px;height:14px"></div><div class="c" style="left:759px;top:645px;width:44px;height:14px"></div><div class="c" style="left:806px;top:645px;width:44px;height:14px"></div><div class="c" style="left:853px;top:645px;width:44px;height:14px"></div><div class="c" style="left:900px;top:645px;width:53px;height:14px"></div><div class="c" style="left:956px;top:645px;width:50px;height:14px"></div>
<div class="c" style="left:155px;top:662px;width:62px;height:14px"></div><div class="c" style="left:220px;top:662px;width:44px;height:14px"></div><div class="c" style="left:267px;top:662px;width:28px;height:14px"></div><div class="c" style="left:298px;top:662px;width:38px;height:14px"></div><div class="c" style="left:339px;top:662px;width:18px;height:14px"></div><div class="c" style="left:360px;top:662px;width:22px;height:14px"></div><div class="c" style="left:385px;top:662px;width:42px;height:14px"></div><div class="c" style="left:430px;top:662px;width:44px;height:14px"></div><div class="c" style="left:477px;top:662px;width:44px;height:14px"></div><div class="c" style="left:524px;top:662px;width:44px;height:14px"></div><div class="c" style="left:571px;top:662px;width:44px;height:14px"></div><div class="c" style="left:618px;top:662px;width:44px;height:14px"></div><div class="c" style="left:665px;top:662px;width:44px;height:14px"></div><div class="c" style="left:712px;top:662px;width:44px;height:14px"></div><div class="c" style="left:759px;top:662px;width:44px;height:14px"></div><div class="c" style="left:806px;top:662px;width:44px;height:14px"></div><div class="c" style="left:853px;top:662px;width:44px;height:14px"></div><div class="c" style="left:900px;top:662px;width:53px;height:14px"></div><div class="c" style="left:956px;top:662px;width:50px;height:14px"></div>
<div class="c" style="left:155px;top:679px;width:62px;height:14px"></div><div class="c" style="left:220px;top:679px;width:44px;height:14px"></div><div class="c" style="left:267px;top:679px;width:28px;height:14px"></div><div class="c" style="left:298px;top:679px;width:38px;height:14px"></div><div class="c" style="left:339px;top:679px;width:18px;height:14px"></div><div class="c" style="left:360px;top:679px;width:22px;height:14px"></div><div class="c" style="left:385px;top:679px;width:42px;height:14px"></div><div class="c" style="left:430px;top:679px;width:44px;height:14px"></div><div class="c" style="left:477px;top:679px;width:44px;height:14px"></div><div class="c" style="left:524px;top:679px;width:44px;height:14px"></div><div class="c" style="left:571px;top:679px;width:44px;height:14px"></div><div class="c" style="left:618px;top:679px;width:44px;height:14px"></div><div class="c" style="left:665px;top:679px;width:44px;height:14px"></div><div class="c" style="left:712px;top:679px;width:44px;height:14px"></div><div class="c" style="left:759px;top:679px;width:44px;height:14px"></div><div class="c" style="left:806px;top:679px;width:44px;height:14px"></div><div class="c" style="left:853px;top:679px;width:44px;height:14px"></div><div class="c" style="left:900px;top:679px;width:53px;height:14px"></div><div class="c" style="left:956px;top:679px;width:50px;height:14px"></div>
<div class="c" style="left:155px;top:696px;width:62px;height:14px"></div><div class="c" style="left:220px;top:696px;width:44px;height:14px"></div><div class="c" style="left:267px;top:696px;width:28px;height:14px"></div><div class="c" style="left:298px;top:696px;width:38px;height:14px"></div><div class="c" style="left:339px;top:696px;width:18px;height:14px"></div><div class="c" style="left:360px;top:696px;width:22px;height:14px"></div><div class="c" style="left:385px;top:696px;width:42px;height:14px"></div><div class="c" style="left:430px;top:696px;width:44px;height:14px"></div><div class="c" style="left:477px;top:696px;width:44px;height:14px"></div><div class="c" style="left:524px;top:696px;width:44px;height:14px"></div><div class="c" style="left:571px;top:696px;width:44px;height:14px"></div><div class="c" style="left:618px;top:696px;width:44px;height:14px"></div><div class="c" style="left:665px;top:696px;width:44px;height:14px"></div><div class="c" style="left:712px;top:696px;width:44px;height:14px"></div><div class="c" style="left:759px;top:696px;width:44px;height:14px"></div><div class="c" style="left:806px;top:696px;width:44px;height:14px"></div><div class="c" style="left:853px;top:696px;width:44px;height:14px"></div><div class="c" style="left:900px;top:696px;width:53px;height:14px"></div><div class="c" style="left:956px;top:696px;width:50px;height:14px"></div>
<div class="c" style="left:155px;top:713px;width:62px;height:14px"></div><div class="c" style="left:220px;top:713px;width:44px;height:14px"></div><div class="c" style="left:267px;top:713px;width:28px;height:14px"></div><div class="c" style="left:298px;top:713px;width:38px;height:14px"></div><div class="c" style="left:339px;top:713px;width:18px;height:14px"></div><div class="c" style="left:360px;top:713px;width:22px;height:14px"></div><div class="c" style="left:385px;top:713px;width:42px;height:14px"></div><div class="c" style="left:430px;top:713px;width:44px;height:14px"></div><div class="c" style="left:477px;top:713px;width:44px;height:14px"></div><div class="c" style="left:524px;top:713px;width:44px;height:14px"></div><div class="c" style="left:571px;top:713px;width:44px;height:14px"></div><div class="c" style="left:618px;top:713px;width:44px;height:14px"></div><div class="c" style="left:665px;top:713px;width:44px;height:14px"></div><div class="c" style="left:712px;top:713px;width:44px;height:14px"></div><div class="c" style="left:759px;top:713px;width:44px;height:14px"></div><div class="c" style="left:806px;top:713px;width:44px;height:14px"></div><div class="c" style="left:853px;top:713px;width:44px;height:14px"></div><div class="c" style="left:900px;top:713px;width:53px;height:14px"></div><div class="c" style="left:956px;top:713px;width:50px;height:14px"></div>
<div class="c" style="left:155px;top:730px;width:62px;height:14px"></div><div class="c" style="left:220px;top:730px;width:44px;height:14px"></div><div class="c" style="left:267px;top:730px;width:28px;height:14px"></div><div class="c" style="left:298px;top:730px;width:38px;height:14px"></div><div class="c" style="left:339px;top:730px;width:18px;height:14px"></div><div class="c" style="left:360px;top:730px;width:22px;height:14px"></div><div class="c" style="left:385px;top:730px;width:42px;height:14px"></div><div class="c" style="left:430px;top:730px;width:44px;height:14px"></div><div class="c" style="left:477px;top:730px;width:44px;height:14px"></div><div class="c" style="left:524px;top:730px;width:44px;height:14px"></div><div class="c" style="left:571px;top:730px;width:44px;height:14px"></div><div class="c" style="left:618px;top:730px;width:44px;height:14px"></div><div class="c" style="left:665px;top:730px;width:44px;height:14px"></div><div class="c" style="left:712px;top:730px;width:44px;height:14px"></div><div class="c" style="left:759px;top:730px;width:44px;height:14px"></div><div class="c" style="left:806px;top:730px;width:44px;height:14px"></div><div class="c" style="left:853px;top:730px;width:44px;height:14px"></div><div class="c" style="left:900px;top:730px;width:53px;height:14px"></div><div class="c" style="left:956px;top:730px;width:50px;height:14px"></div>
<div class="c" style="left:155px;top:747px;width:62px;height:14px"></div><div class="c" style="left:220px;top:747px;width:44px;height:14px"></div><div class="c" style="left:267px;top:747px;width:28px;height:14px"></div><div class="c" style="left:298px;top:747px;width:38px;height:14px"></div><div class="c" style="left:339px;top:747px;width:18px;height:14px"></div><div class="c" style="left:360px;top:747px;width:22px;height:14px"></div><div class="c" style="left:385px;top:747px;width:42px;height:14px"></div><div class="c" style="left:430px;top:747px;width:44px;height:14px"></div><div class="c" style="left:477px;top:747px;width:44px;height:14px"></div><div class="c" style="left:524px;top:747px;width:44px;height:14px"></div><div class="c" style="left:571px;top:747px;width:44px;height:14px"></div><div class="c" style="left:618px;top:747px;width:44px;height:14px"></div><div class="c" style="left:665px;top:747px;width:44px;height:14px"></div><div class="c" style="left:712px;top:747px;width:44px;height:14px"></div><div class="c" style="left:759px;top:747px;width:44px;height:14px"></div><div class="c" style="left:806px;top:747px;width:44px;height:14px"></div><div class="c" style="left:853px;top:747px;width:44px;height:14px"></div><div class="c" style="left:900px;top:747px;width:53px;height:14px"></div><div class="c" style="left:956px;top:747px;width:50px;height:14px"></div>
<div class="c" style="left:155px;top:764px;width:62px;height:14px"></div><div class="c" style="left:220px;top:764px;width:44px;height:14px"></div><div class="c" style="left:267px;top:764px;width:28px;height:14px"></div><div class="c" style="left:298px;top:764px;width:38px;height:14px"></div><div class="c" style="left:339px;top:764px;width:18px;height:14px"></div><div class="c" style="left:360px;top:764px;width:22px;height:14px"></div><div class="c" style="left:385px;top:764px;width:42px;height:14px"></div><div class="c" style="left:430px;top:764px;width:44px;height:14px"></div><div class="c" style="left:477px;top:764px;width:44px;height:14px"></div><div class="c" style="left:524px;top:764px;width:44px;height:14px"></div><div class="c" style="left:571px;top:764px;width:44px;height:14px"></div><div class="c" style="left:618px;top:764px;width:44px;height:14px"></div><div class="c" style="left:665px;top:764px;width:44px;height:14px"></div><div class="c" style="left:712px;top:764px;width:44px;height:14px"></div><div class="c" style="left:759px;top:764px;width:44px;height:14px"></div><div class="c" style="left:806px;top:764px;width:44px;height:14px"></div><div class="c" style="left:853px;top:764px;width:44px;height:14px"></div><div class="c" style="left:900px;top:764px;width:53px;height:14px"></div><div class="c" style="left:956px;top:764px;width:50px;height:14px"></div>
<div class="c" style="left:155px;top:781px;width:62px;height:14px"></div><div class="c" style="left:220px;top:781px;width:44px;height:14px"></div><div class="c" style="left:267px;top:781px;width:28px;height:14px"></div><div class="c" style="left:298px;top:781px;width:38px;height:14px"></div><div class="c" style="left:339px;top:781px;width:18px;height:14px"></div><div class="c" style="left:360px;top:781px;width:22px;height:14px"></div><div class="c" style="left:385px;top:781px;width:42px;height:14px"></div><div class="c" style="left:430px;top:781px;width:44px;height:14px"></div><div class="c" style="left:477px;top:781px;width:44px;height:14px"></div><div class="c" style="left:524px;top:781px;width:44px;height:14px"></div><div class="c" style="left:571px;top:781px;width:44px;height:14px"></div><div class="c" style="left:618px;top:781px;width:44px;height:14px"></div><div class="c" style="left:665px;top:781px;width:44px;height:14px"></div><div class="c" style="left:712px;top:781px;width:44px;height:14px"></div><div class="c" style="left:759px;top:781px;width:44px;height:14px"></div><div class="c" style="left:806px;top:781px;width:44px;height:14px"></div><div class="c" style="left:853px;top:781px;width:44px;height:14px"></div><div class="c" style="left:900px;top:781px;width:53px;height:14px"></div><div class="c" style="left:956px;top:781px;width:50px;height:14px"></div>
<div class="c" style="left:155px;top:798px;width:62px;height:14px"></div><div class="c" style="left:220px;top:798px;width:44px;height:14px"></div><div class="c" style="left:267px;top:798px;width:28px;height:14px"></div><div class="c" style="left:298px;top:798px;width:38px;height:14px"></div><div class="c" style="left:339px;top:798px;width:18px;height:14px"></div><div class="c" style="left:360px;top:798px;width:22px;height:14px"></div><div class="c" style="left:385px;top:798px;width:42px;height:14px"></div><div class="c" style="left:430px;top:798px;width:44px;height:14px"></div><div class="c" style="left:477px;top:798px;width:44px;height:14px"></div><div class="c" style="left:524px;top:798px;width:44px;height:14px"></div><div class="c" style="left:571px;top:798px;width:44px;height:14px"></div><div class="c" style="left:618px;top:798px;width:44px;height:14px"></div><div class="c" style="left:665px;top:798px;width:44px;height:14px"></div><div class="c" style="left:712px;top:798px;width:44px;height:14px"></div><div class="c" style="left:759px;top:798px;width:44px;height:14px"></div><div class="c" style="left:806px;top:798px;width:44px;height:14px"></div><div class="c" style="left:853px;top:798px;width:44px;height:14px"></div><div class="c" style="left:900px;top:798px;width:53px;height:14px"></div><div class="c" style="left:956px;top:798px;width:50px;height:14px"></div>
<div class="c" style="left:155px;top:815px;width:62px;height:14px"></div><div class="c" style="left:220px;top:815px;width:44px;height:14px"></div><div class="c" style="left:267px;top:815px;width:28px;height:14px"></div><div class="c" style="left:298px;top:815px;width:38px;height:14px"></div><div class="c" style="left:339px;top:815px;width:18px;height:14px"></div><div class="c" style="left:360px;top:815px;width:22px;height:14px"></div><div class="c" style="left:385px;top:815px;width:42px;height:14px"></div><div class="c" style="left:430px;top:815px;width:44px;height:14px"></div><div class="c" style="left:477px;top:815px;width:44px;height:14px"></div><div class="c" style="left:524px;top:815px;width:44px;height:14px"></div><div class="c" style="left:571px;top:815px;width:44px;height:14px"></div><div class="c" style="left:618px;top:815px;width:44px;height:14px"></div><div class="c" style="left:665px;top:815px;width:44px;height:14px"></div><div class="c" style="left:712px;top:815px;width:44px;height:14px"></div><div class="c" style="left:759px;top:815px;width:44px;height:14px"></div><div class="c" style="left:806px;top:815px;width:44px;height:14px"></div><div class="c" style="left:853px;top:815px;width:44px;height:14px"></div><div class="c" style="left:900px;top:815px;width:53px;height:14px"></div><div class="c" style="left:956px;top:815px;width:50px;height:14px"></div>
<div class="c" style="left:155px;top:832px;width:62px;height:14px"></div><div class="c" style="left:220px;top:832px;width:44px;height:14px"></div><div class="c" style="left:267px;top:832px;width:28px;height:14px"></div><div class="c" style="left:298px;top:832px;width:38px;height:14px"></div><div class="c" style="left:339px;top:832px;width:18px;height:14px"></div><div class="c" style="left:360px;top:832px;width:22px;height:14px"></div><div class="c" style="left:385px;top:832px;width:42px;height:14px"></div><div class="c" style="left:430px;top:832px;width:44px;height:14px"></div><div class="c" style="left:477px;top:832px;width:44px;height:14px"></div><div class="c" style="left:524px;top:832px;width:44px;height:14px"></div><div class="c" style="left:571px;top:832px;width:44px;height:14px"></div><div class="c" style="left:618px;top:832px;width:44px;height:14px"></div><div class="c" style="left:665px;top:832px;width:44px;height:14px"></div><div class="c" style="left:712px;top:832px;width:44px;height:14px"></div><div class="c" style="left:759px;top:832px;width:44px;height:14px"></div><div class="c" style="left:806px;top:832px;width:44px;height:14px"></div><div class="c" style="left:853px;top:832px;width:44px;height:14px"></div><div class="c" style="left:900px;top:832px;width:53px;height:14px"></div><div class="c" style="left:956px;top:832px;width:50px;height:14px"></div>
<div class="c" style="left:155px;top:849px;width:62px;height:14px"></div><div class="c" style="left:220px;top:849px;width:44px;height:14px"></div><div class="c" style="left:267px;top:849px;width:28px;height:14px"></div><div class="c" style="left:298px;top:849px;width:38px;height:14px"></div><div class="c" style="left:339px;top:849px;width:18px;height:14px"></div><div class="c" style="left:360px;top:849px;width:22px;height:14px"></div><div class="c" style="left:385px;top:849px;width:42px;height:14px"></div><div class="c" style="left:430px;top:849px;width:44px;height:14px"></div><div class="c" style="left:477px;top:849px;width:44px;height:14px"></div><div class="c" style="left:524px;top:849px;width:44px;height:14px"></div><div class="c" style="left:571px;top:849px;width:44px;height:14px"></div><div class="c" style="left:618px;top:849px;width:44px;height:14px"></div><div class="c" style="left:665px;top:849px;width:44px;height:14px"></div><div class="c" style="left:712px;top:849px;width:44px;height:14px"></div><div class="c" style="left:759px;top:849px;width:44px;height:14px"></div><div class="c" style="left:806px;top:849px;width:44px;height:14px"></div><div class="c" style="left:853px;top:849px;width:44px;height:14px"></div><div class="c" style="left:900px;top:849px;width:53px;height:14px"></div><div class="c" style="left:956px;top:849px;width:50px;height:14px"></div>
<div class="c" style="left:155px;top:866px;width:62px;height:14px"></div><div class="c" style="left:220px;top:866px;width:44px;height:14px"></div><div class="c" style="left:267px;top:866px;width:28px;height:14px"></div><div class="c" style="left:298px;top:866px;width:38px;height:14px"></div><div class="c" style="left:339px;top:866px;width:18px;height:14px"></div><div class="c" style="left:360px;top:866px;width:22px;height:14px"></div><div class="c" style="left:385px;top:866px;width:42px;height:14px"></div><div class="c" style="left:430px;top:866px;width:44px;height:14px"></div><div class="c" style="left:477px;top:866px;width:44px;height:14px"></div><div class="c" style="left:524px;top:866px;width:44px;height:14px"></div><div class="c" style="left:571px;top:866px;width:44px;height:14px"></div><div class="c" style="left:618px;top:866px;width:44px;height:14px"></div><div class="c" style="left:665px;top:866px;width:44px;height:14px"></div><div class="c" style="left:712px;top:866px;width:44px;height:14px"></div><div class="c" style="left:759px;top:866px;width:44px;height:14px"></div><div class="c" style="left:806px;top:866px;width:44px;height:14px"></div><div class="c" style="left:853px;top:866px;width:44px;height:14px"></div><div class="c" style="left:900px;top:866px;width:53px;height:14px"></div><div class="c" style="left:956px;top:866px;width:50px;height:14px"></div>
<div class="t" style="left:157px;top:357.00px;font-size:11px;line-height:14px;color:#000;font-weight:normal;font-family:'Liberation Sans', sans-serif;letter-spacing:-0.35px;">Date</div>
<div class="t" style="left:222px;top:357.00px;font-size:11px;line-height:14px;color:#000;font-weight:normal;font-family:'Liberation Sans', sans-serif;letter-spacing:-0.35px;">Name</div>
<div class="t" style="left:269px;top:357.00px;font-size:11px;line-height:14px;color:#000;font-weight:normal;font-family:'Liberation Sans', sans-serif;letter-spacing:-0.35px;">Billing</div>
<div class="t" style="left:300px;top:357.00px;font-size:11px;line-height:14px;color:#000;font-weight:normal;font-family:'Liberation Sans', sans-serif;letter-spacing:-0.35px;">Code</div>
<div class="t" style="left:341px;top:357.00px;font-size:11px;line-height:14px;color:#000;font-weight:normal;font-family:'Liberation Sans', sans-serif;letter-spacing:-0.35px;">Tth</div>
<div class="t" style="left:362px;top:357.00px;font-size:11px;line-height:14px;color:#000;font-weight:normal;font-family:'Liberation Sans', sans-serif;letter-spacing:-0.35px;">Surf</div>
<div class="t" style="left:387px;top:357.00px;font-size:11px;line-height:14px;color:#000;font-weight:normal;font-family:'Liberation Sans', sans-serif;letter-spacing:-0.35px;">Provider</div>
<div class="t" style="left:432px;top:357.00px;font-size:11px;line-height:14px;color:#000;font-weight:normal;font-family:'Liberation Sans', sans-serif;letter-spacing:-0.35px;">Fee</div>
<div class="t" style="left:479px;top:357.00px;font-size:11px;line-height:14px;color:#000;font-weight:normal;font-family:'Liberation Sans', sans-serif;letter-spacing:-0.35px;">Ins Est</div>
<div class="t" style="left:526px;top:357.00px;font-size:11px;line-height:14px;color:#000;font-weight:normal;font-family:'Liberation Sans', sans-serif;letter-spacing:-0.35px;">Ins Adj</div>
<div class="t" style="left:573px;top:357.00px;font-size:11px;line-height:14px;color:#000;font-weight:normal;font-family:'Liberation Sans', sans-serif;letter-spacing:-0.35px;">Ins Paid</div>
<div class="t" style="left:620px;top:357.00px;font-size:11px;line-height:14px;color:#000;font-weight:normal;font-family:'Liberation Sans', sans-serif;letter-spacing:-0.35px;">Pat Est</div>
<div class="t" style="left:667px;top:357.00px;font-size:11px;line-height:14px;color:#000;font-weight:normal;font-family:'Liberation Sans', sans-serif;letter-spacing:-0.35px;">Pat Adj</div>
<div class="t" style="left:714px;top:357.00px;font-size:11px;line-height:14px;color:#000;font-weight:normal;font-family:'Liberation Sans', sans-serif;letter-spacing:-0.35px;">Pat Paid</div>
<div class="t" style="left:761px;top:357.00px;font-size:11px;line-height:14px;color:#000;font-weight:normal;font-family:'Liberation Sans', sans-serif;letter-spacing:-0.35px;">Balance</div>
<div class="t" style="left:808px;top:357.00px;font-size:11px;line-height:14px;color:#000;font-weight:normal;font-family:'Liberation Sans', sans-serif;letter-spacing:-0.35px;">Ins Due</div>
<div class="t" style="left:855px;top:357.00px;font-size:11px;line-height:14px;color:#000;font-weight:normal;font-family:'Liberation Sans', sans-serif;letter-spacing:-0.35px;">Pat Due</div>
<div class="t" style="left:902px;top:357.00px;font-size:11px;line-height:14px;color:#000;font-weight:normal;font-family:'Liberation Sans', sans-serif;letter-spacing:-0.35px;">Pmt Today</div>
<div class="t" style="left:958px;top:357.00px;font-size:11px;line-height:14px;color:#000;font-weight:normal;font-family:'Liberation Sans', sans-serif;letter-spacing:-0.35px;">Adj Today</div>
<div class="t" style="left:157px;top:375.00px;font-size:11px;line-height:14px;color:#000;font-weight:normal;font-family:'Liberation Sans', sans-serif;letter-spacing:0px;">7/1/2020</div>
<div class="t" style="left:222px;top:375.00px;font-size:11px;line-height:14px;color:#000;font-weight:normal;font-family:'Liberation Sans', sans-serif;letter-spacing:-0.5px;">Alicia</div>
<div class="t" style="right:1053px;top:375.00px;font-size:11px;line-height:14px;color:#000;font-weight:normal;font-family:'Liberation Sans', sans-serif;letter-spacing:-0.15px;">83</div>
<div class="t" style="left:300px;top:375.00px;font-size:11px;line-height:14px;color:#000;font-weight:normal;font-family:'Liberation Sans', sans-serif;letter-spacing:-0.25px;">D6010</div>
<div class="t" style="left:387px;top:375.00px;font-size:11px;line-height:14px;color:#000;font-weight:normal;font-family:'Liberation Sans', sans-serif;letter-spacing:-0.7px;">BRO00</div>
<div class="t" style="right:874px;top:375.00px;font-size:11px;line-height:14px;color:#000;font-weight:normal;font-family:'Liberation Sans', sans-serif;letter-spacing:-0.15px;">1350.00</div>
<div class="t" style="right:686px;top:375.00px;font-size:11px;line-height:14px;color:#000;font-weight:normal;font-family:'Liberation Sans', sans-serif;letter-spacing:-0.15px;">1350.00</div>
<div class="t" style="left:157px;top:392.00px;font-size:11px;line-height:14px;color:#000;font-weight:normal;font-family:'Liberation Sans', sans-serif;letter-spacing:0px;">7/1/2020</div>
<div class="t" style="left:222px;top:392.00px;font-size:11px;line-height:14px;color:#000;font-weight:normal;font-family:'Liberation Sans', sans-serif;letter-spacing:-0.5px;">Alicia</div>
<div class="t" style="right:1053px;top:392.00px;font-size:11px;line-height:14px;color:#000;font-weight:normal;font-family:'Liberation Sans', sans-serif;letter-spacing:-0.15px;">83</div>
<div class="t" style="left:300px;top:392.00px;font-size:11px;line-height:14px;color:#000;font-weight:normal;font-family:'Liberation Sans', sans-serif;letter-spacing:-0.25px;">D4355</div>
<div class="t" style="left:387px;top:392.00px;font-size:11px;line-height:14px;color:#000;font-weight:normal;font-family:'Liberation Sans', sans-serif;letter-spacing:-0.7px;">BRO00</div>
<div class="t" style="right:874px;top:392.00px;font-size:11px;line-height:14px;color:#000;font-weight:normal;font-family:'Liberation Sans', sans-serif;letter-spacing:-0.15px;">148.50</div>
<div class="t" style="right:827px;top:392.00px;font-size:11px;line-height:14px;color:#000;font-weight:normal;font-family:'Liberation Sans', sans-serif;letter-spacing:-0.15px;">148.50</div>
<div class="t" style="left:157px;top:409.00px;font-size:11px;line-height:14px;color:#000;font-weight:normal;font-family:'Liberation Sans', sans-serif;letter-spacing:0px;">7/1/2020</div>
<div class="t" style="left:222px;top:409.00px;font-size:11px;line-height:14px;color:#000;font-weight:normal;font-family:'Liberation Sans', sans-serif;letter-spacing:-0.5px;">Alicia</div>
<div class="t" style="right:1053px;top:409.00px;font-size:11px;line-height:14px;color:#000;font-weight:normal;font-family:'Liberation Sans', sans-serif;letter-spacing:-0.15px;">83</div>
<div class="t" style="left:300px;top:409.00px;font-size:11px;line-height:14px;color:#000;font-weight:normal;font-family:'Liberation Sans', sans-serif;letter-spacing:-0.25px;">D7210</div>
<div class="t" style="left:341px;top:409.00px;font-size:11px;line-height:14px;color:#000;font-weight:normal;font-family:'Liberation Sans', sans-serif;letter-spacing:-0.2px;">1</div>
<div class="t" style="left:387px;top:409.00px;font-size:11px;line-height:14px;color:#000;font-weight:normal;font-family:'Liberation Sans', sans-serif;letter-spacing:-0.7px;">BRO00</div>
<div class="t" style="right:874px;top:409.00px;font-size:11px;line-height:14px;color:#000;font-weight:normal;font-family:'Liberation Sans', sans-serif;letter-spacing:-0.15px;">139.00</div>
<div class="t" style="right:827px;top:409.00px;font-size:11px;line-height:14px;color:#000;font-weight:normal;font-family:'Liberation Sans', sans-serif;letter-spacing:-0.15px;">139.00</div>
<div class="t" style="left:157px;top:426.00px;font-size:11px;line-height:14px;color:#000;font-weight:normal;font-family:'Liberation Sans', sans-serif;letter-spacing:0px;">7/1/2020</div>
<div class="t" style="left:222px;top:426.00px;font-size:11px;line-height:14px;color:#000;font-weight:normal;font-family:'Liberation Sans', sans-serif;letter-spacing:-0.5px;">Alicia</div>
<div class="t" style="right:1053px;top:426.00px;font-size:11px;line-height:14px;color:#000;font-weight:normal;font-family:'Liberation Sans', sans-serif;letter-spacing:-0.15px;">83</div>
<div class="t" style="left:300px;top:426.00px;font-size:11px;line-height:14px;color:#000;font-weight:normal;font-family:'Liberation Sans', sans-serif;letter-spacing:-0.25px;">D7210</div>
<div class="t" style="left:341px;top:426.00px;font-size:11px;line-height:14px;color:#000;font-weight:normal;font-family:'Liberation Sans', sans-serif;letter-spacing:-0.2px;">16</div>
<div class="t" style="left:387px;top:426.00px;font-size:11px;line-height:14px;color:#000;font-weight:normal;font-family:'Liberation Sans', sans-serif;letter-spacing:-0.7px;">BRO00</div>
<div class="t" style="right:874px;top:426.00px;font-size:11px;line-height:14px;color:#000;font-weight:normal;font-family:'Liberation Sans', sans-serif;letter-spacing:-0.15px;">139.00</div>
<div class="t" style="right:827px;top:426.00px;font-size:11px;line-height:14px;color:#000;font-weight:normal;font-family:'Liberation Sans', sans-serif;letter-spacing:-0.15px;">139.00</div>
<div class="t" style="left:157px;top:443.00px;font-size:11px;line-height:14px;color:#000;font-weight:normal;font-family:'Liberation Sans', sans-serif;letter-spacing:0px;">7/1/2020</div>
<div class="t" style="left:222px;top:443.00px;font-size:11px;line-height:14px;color:#000;font-weight:normal;font-family:'Liberation Sans', sans-serif;letter-spacing:-0.5px;">Alicia</div>
<div class="t" style="right:1053px;top:443.00px;font-size:11px;line-height:14px;color:#000;font-weight:normal;font-family:'Liberation Sans', sans-serif;letter-spacing:-0.15px;">83</div>
<div class="t" style="left:300px;top:443.00px;font-size:11px;line-height:14px;color:#000;font-weight:normal;font-family:'Liberation Sans', sans-serif;letter-spacing:-0.25px;">D7210</div>
<div class="t" style="left:341px;top:443.00px;font-size:11px;line-height:14px;color:#000;font-weight:normal;font-family:'Liberation Sans', sans-serif;letter-spacing:-0.2px;">17</div>
<div class="t" style="left:387px;top:443.00px;font-size:11px;line-height:14px;color:#000;font-weight:normal;font-family:'Liberation Sans', sans-serif;letter-spacing:-0.7px;">BRO00</div>
<div class="t" style="right:874px;top:443.00px;font-size:11px;line-height:14px;color:#000;font-weight:normal;font-family:'Liberation Sans', sans-serif;letter-spacing:-0.15px;">139.00</div>
<div class="t" style="right:827px;top:443.00px;font-size:11px;line-height:14px;color:#000;font-weight:normal;font-family:'Liberation Sans', sans-serif;letter-spacing:-0.15px;">139.00</div>
<div class="t" style="left:157px;top:460.00px;font-size:11px;line-height:14px;color:#000;font-weight:normal;font-family:'Liberation Sans', sans-serif;letter-spacing:0px;">7/1/2020</div>
<div class="t" style="left:222px;top:460.00px;font-size:11px;line-height:14px;color:#000;font-weight:normal;font-family:'Liberation Sans', sans-serif;letter-spacing:-0.5px;">Alicia</div>
<div class="t" style="right:1053px;top:460.00px;font-size:11px;line-height:14px;color:#000;font-weight:normal;font-family:'Liberation Sans', sans-serif;letter-spacing:-0.15px;">83</div>
<div class="t" style="left:300px;top:460.00px;font-size:11px;line-height:14px;color:#000;font-weight:normal;font-family:'Liberation Sans', sans-serif;letter-spacing:-0.25px;">D7210</div>
<div class="t" style="left:341px;top:460.00px;font-size:11px;line-height:14px;color:#000;font-weight:normal;font-family:'Liberation Sans', sans-serif;letter-spacing:-0.2px;">32</div>
<div class="t" style="left:387px;top:460.00px;font-size:11px;line-height:14px;color:#000;font-weight:normal;font-family:'Liberation Sans', sans-serif;letter-spacing:-0.7px;">BRO00</div>
<div class="t" style="right:874px;top:460.00px;font-size:11px;line-height:14px;color:#000;font-weight:normal;font-family:'Liberation Sans', sans-serif;letter-spacing:-0.15px;">139.00</div>
<div class="t" style="right:827px;top:460.00px;font-size:11px;line-height:14px;color:#000;font-weight:normal;font-family:'Liberation Sans', sans-serif;letter-spacing:-0.15px;">139.00</div>
<div class="t" style="left:157px;top:477.00px;font-size:11px;line-height:14px;color:#000;font-weight:normal;font-family:'Liberation Sans', sans-serif;letter-spacing:0px;">7/1/2020</div>
<div class="t" style="left:222px;top:477.00px;font-size:11px;line-height:14px;color:#000;font-weight:normal;font-family:'Liberation Sans', sans-serif;letter-spacing:-0.5px;">Alicia</div>
<div class="t" style="right:1053px;top:477.00px;font-size:11px;line-height:14px;color:#000;font-weight:normal;font-family:'Liberation Sans', sans-serif;letter-spacing:-0.15px;">83</div>
<div class="t" style="left:300px;top:477.00px;font-size:11px;line-height:14px;color:#000;font-weight:normal;font-family:'Liberation Sans', sans-serif;letter-spacing:-0.25px;">D7210</div>
<div class="t" style="left:387px;top:477.00px;font-size:11px;line-height:14px;color:#000;font-weight:normal;font-family:'Liberation Sans', sans-serif;letter-spacing:-0.7px;">BRO00</div>
<div class="t" style="right:874px;top:477.00px;font-size:11px;line-height:14px;color:#000;font-weight:normal;font-family:'Liberation Sans', sans-serif;letter-spacing:-0.15px;">139.00</div>
<div class="t" style="right:827px;top:477.00px;font-size:11px;line-height:14px;color:#000;font-weight:normal;font-family:'Liberation Sans', sans-serif;letter-spacing:-0.15px;">139.00</div>
<div class="t" style="left:157px;top:494.00px;font-size:11px;line-height:14px;color:#000;font-weight:normal;font-family:'Liberation Sans', sans-serif;letter-spacing:0px;">7/1/2020</div>
<div class="t" style="left:222px;top:494.00px;font-size:11px;line-height:14px;color:#000;font-weight:normal;font-family:'Liberation Sans', sans-serif;letter-spacing:-0.5px;">Alicia</div>
<div class="t" style="right:1053px;top:494.00px;font-size:11px;line-height:14px;color:#000;font-weight:normal;font-family:'Liberation Sans', sans-serif;letter-spacing:-0.15px;">83</div>
<div class="t" style="left:300px;top:494.00px;font-size:11px;line-height:14px;color:#000;font-weight:normal;font-family:'Liberation Sans', sans-serif;letter-spacing:-0.25px;">D7210</div>
<div class="t" style="left:341px;top:494.00px;font-size:11px;line-height:14px;color:#000;font-weight:normal;font-family:'Liberation Sans', sans-serif;letter-spacing:-0.2px;">17</div>
<div class="t" style="left:387px;top:494.00px;font-size:11px;line-height:14px;color:#000;font-weight:normal;font-family:'Liberation Sans', sans-serif;letter-spacing:-0.7px;">BRO00</div>
<div class="t" style="right:874px;top:494.00px;font-size:11px;line-height:14px;color:#000;font-weight:normal;font-family:'Liberation Sans', sans-serif;letter-spacing:-0.15px;">139.00</div>
<div class="t" style="right:827px;top:494.00px;font-size:11px;line-height:14px;color:#000;font-weight:normal;font-family:'Liberation Sans', sans-serif;letter-spacing:-0.15px;">139.00</div>
<div class="t" style="left:157px;top:511.00px;font-size:11px;line-height:14px;color:#000;font-weight:normal;font-family:'Liberation Sans', sans-serif;letter-spacing:0px;">7/1/2020</div>
<div class="t" style="left:222px;top:511.00px;font-size:11px;line-height:14px;color:#000;font-weight:normal;font-family:'Liberation Sans', sans-serif;letter-spacing:-0.5px;">Alicia</div>
<div class="t" style="right:1053px;top:511.00px;font-size:11px;line-height:14px;color:#000;font-weight:normal;font-family:'Liberation Sans', sans-serif;letter-spacing:-0.15px;">83</div>
<div class="t" style="left:300px;top:511.00px;font-size:11px;line-height:14px;color:#000;font-weight:normal;font-family:'Liberation Sans', sans-serif;letter-spacing:-0.25px;">D7210</div>
<div class="t" style="left:341px;top:511.00px;font-size:11px;line-height:14px;color:#000;font-weight:normal;font-family:'Liberation Sans', sans-serif;letter-spacing:-0.2px;">18</div>
<div class="t" style="left:387px;top:511.00px;font-size:11px;line-height:14px;color:#000;font-weight:normal;font-family:'Liberation Sans', sans-serif;letter-spacing:-0.7px;">BRO00</div>
<div class="t" style="right:874px;top:511.00px;font-size:11px;line-height:14px;color:#000;font-weight:normal;font-family:'Liberation Sans', sans-serif;letter-spacing:-0.15px;">139.00</div>
<div class="t" style="right:827px;top:511.00px;font-size:11px;line-height:14px;color:#000;font-weight:normal;font-family:'Liberation Sans', sans-serif;letter-spacing:-0.15px;">139.00</div>
<div class="t" style="left:157px;top:528.00px;font-size:11px;line-height:14px;color:#000;font-weight:normal;font-family:'Liberation Sans', sans-serif;letter-spacing:0px;">7/1/2020</div>
<div class="t" style="left:222px;top:528.00px;font-size:11px;line-height:14px;color:#000;font-weight:normal;font-family:'Liberation Sans', sans-serif;letter-spacing:-0.5px;">Alicia</div>
<div class="t" style="right:1053px;top:528.00px;font-size:11px;line-height:14px;color:#000;font-weight:normal;font-family:'Liberation Sans', sans-serif;letter-spacing:-0.15px;">83</div>
<div class="t" style="left:300px;top:528.00px;font-size:11px;line-height:14px;color:#000;font-weight:normal;font-family:'Liberation Sans', sans-serif;letter-spacing:-0.25px;">D7210</div>
<div class="t" style="left:341px;top:528.00px;font-size:11px;line-height:14px;color:#000;font-weight:normal;font-family:'Liberation Sans', sans-serif;letter-spacing:-0.2px;">19</div>
<div class="t" style="left:387px;top:528.00px;font-size:11px;line-height:14px;color:#000;font-weight:normal;font-family:'Liberation Sans', sans-serif;letter-spacing:-0.7px;">BRO00</div>
<div class="t" style="right:874px;top:528.00px;font-size:11px;line-height:14px;color:#000;font-weight:normal;font-family:'Liberation Sans', sans-serif;letter-spacing:-0.15px;">139.00</div>
<div class="t" style="right:827px;top:528.00px;font-size:11px;line-height:14px;color:#000;font-weight:normal;font-family:'Liberation Sans', sans-serif;letter-spacing:-0.15px;">139.00</div>
<div class="t" style="left:157px;top:545.00px;font-size:11px;line-height:14px;color:#000;font-weight:normal;font-family:'Liberation Sans', sans-serif;letter-spacing:0px;">7/1/2020</div>
<div class="t" style="left:222px;top:545.00px;font-size:11px;line-height:14px;color:#000;font-weight:normal;font-family:'Liberation Sans', sans-serif;letter-spacing:-0.5px;">Alicia</div>
<div class="t" style="right:1053px;top:545.00px;font-size:11px;line-height:14px;color:#000;font-weight:normal;font-family:'Liberation Sans', sans-serif;letter-spacing:-0.15px;">83</div>
<div class="t" style="left:300px;top:545.00px;font-size:11px;line-height:14px;color:#000;font-weight:normal;font-family:'Liberation Sans', sans-serif;letter-spacing:-0.25px;">D7210</div>
<div class="t" style="left:341px;top:545.00px;font-size:11px;line-height:14px;color:#000;font-weight:normal;font-family:'Liberation Sans', sans-serif;letter-spacing:-0.2px;">20</div>
<div class="t" style="left:387px;top:545.00px;font-size:11px;line-height:14px;color:#000;font-weight:normal;font-family:'Liberation Sans', sans-serif;letter-spacing:-0.7px;">BRO00</div>
<div class="t" style="right:874px;top:545.00px;font-size:11px;line-height:14px;color:#000;font-weight:normal;font-family:'Liberation Sans', sans-serif;letter-spacing:-0.15px;">139.00</div>
<div class="t" style="right:827px;top:545.00px;font-size:11px;line-height:14px;color:#000;font-weight:normal;font-family:'Liberation Sans', sans-serif;letter-spacing:-0.15px;">139.00</div>
<div class="t" style="left:157px;top:562.00px;font-size:11px;line-height:14px;color:#000;font-weight:normal;font-family:'Liberation Sans', sans-serif;letter-spacing:0px;">7/1/2020</div>
<div class="t" style="left:222px;top:562.00px;font-size:11px;line-height:14px;color:#000;font-weight:normal;font-family:'Liberation Sans', sans-serif;letter-spacing:-0.5px;">Alicia</div>
<div class="t" style="right:1053px;top:562.00px;font-size:11px;line-height:14px;color:#000;font-weight:normal;font-family:'Liberation Sans', sans-serif;letter-spacing:-0.15px;">83</div>
<div class="t" style="left:300px;top:562.00px;font-size:11px;line-height:14px;color:#000;font-weight:normal;font-family:'Liberation Sans', sans-serif;letter-spacing:-0.25px;">D7210</div>
<div class="t" style="left:341px;top:562.00px;font-size:11px;line-height:14px;color:#000;font-weight:normal;font-family:'Liberation Sans', sans-serif;letter-spacing:-0.2px;">21</div>
<div class="t" style="left:387px;top:562.00px;font-size:11px;line-height:14px;color:#000;font-weight:normal;font-family:'Liberation Sans', sans-serif;letter-spacing:-0.7px;">BRO00</div>
<div class="t" style="right:874px;top:562.00px;font-size:11px;line-height:14px;color:#000;font-weight:normal;font-family:'Liberation Sans', sans-serif;letter-spacing:-0.15px;">139.00</div>
<div class="t" style="right:827px;top:562.00px;font-size:11px;line-height:14px;color:#000;font-weight:normal;font-family:'Liberation Sans', sans-serif;letter-spacing:-0.15px;">139.00</div>
<div class="t" style="left:157px;top:579.00px;font-size:11px;line-height:14px;color:#000;font-weight:normal;font-family:'Liberation Sans', sans-serif;letter-spacing:0px;">7/1/2020</div>
<div class="t" style="left:222px;top:579.00px;font-size:11px;line-height:14px;color:#000;font-weight:normal;font-family:'Liberation Sans', sans-serif;letter-spacing:-0.5px;">Alicia</div>
<div class="t" style="right:1053px;top:579.00px;font-size:11px;line-height:14px;color:#000;font-weight:normal;font-family:'Liberation Sans', sans-serif;letter-spacing:-0.15px;">83</div>
<div class="t" style="left:300px;top:579.00px;font-size:11px;line-height:14px;color:#000;font-weight:normal;font-family:'Liberation Sans', sans-serif;letter-spacing:-0.25px;">D7210</div>
<div class="t" style="left:341px;top:579.00px;font-size:11px;line-height:14px;color:#000;font-weight:normal;font-family:'Liberation Sans', sans-serif;letter-spacing:-0.2px;">22</div>
<div class="t" style="left:387px;top:579.00px;font-size:11px;line-height:14px;color:#000;font-weight:normal;font-family:'Liberation Sans', sans-serif;letter-spacing:-0.7px;">BRO00</div>
<div class="t" style="right:874px;top:579.00px;font-size:11px;line-height:14px;color:#000;font-weight:normal;font-family:'Liberation Sans', sans-serif;letter-spacing:-0.15px;">139.00</div>
<div class="t" style="right:827px;top:579.00px;font-size:11px;line-height:14px;color:#000;font-weight:normal;font-family:'Liberation Sans', sans-serif;letter-spacing:-0.15px;">139.00</div>
<div class="t" style="left:157px;top:596.00px;font-size:11px;line-height:14px;color:#000;font-weight:normal;font-family:'Liberation Sans', sans-serif;letter-spacing:0px;">7/1/2020</div>
<div class="t" style="left:222px;top:596.00px;font-size:11px;line-height:14px;color:#000;font-weight:normal;font-family:'Liberation Sans', sans-serif;letter-spacing:-0.5px;">Alicia</div>
<div class="t" style="right:1053px;top:596.00px;font-size:11px;line-height:14px;color:#000;font-weight:normal;font-family:'Liberation Sans', sans-serif;letter-spacing:-0.15px;">83</div>
<div class="t" style="left:300px;top:596.00px;font-size:11px;line-height:14px;color:#000;font-weight:normal;font-family:'Liberation Sans', sans-serif;letter-spacing:-0.25px;">D7210</div>
<div class="t" style="left:341px;top:596.00px;font-size:11px;line-height:14px;color:#000;font-weight:normal;font-family:'Liberation Sans', sans-serif;letter-spacing:-0.2px;">23</div>
<div class="t" style="left:387px;top:596.00px;font-size:11px;line-height:14px;color:#000;font-weight:normal;font-family:'Liberation Sans', sans-serif;letter-spacing:-0.7px;">BRO00</div>
<div class="t" style="right:874px;top:596.00px;font-size:11px;line-height:14px;color:#000;font-weight:normal;font-family:'Liberation Sans', sans-serif;letter-spacing:-0.15px;">139.00</div>
<div class="t" style="right:827px;top:596.00px;font-size:11px;line-height:14px;color:#000;font-weight:normal;font-family:'Liberation Sans', sans-serif;letter-spacing:-0.15px;">139.00</div>
<div class="t" style="left:157px;top:613.00px;font-size:11px;line-height:14px;color:#000;font-weight:normal;font-family:'Liberation Sans', sans-serif;letter-spacing:0px;">7/1/2020</div>
<div class="t" style="left:222px;top:613.00px;font-size:11px;line-height:14px;color:#000;font-weight:normal;font-family:'Liberation Sans', sans-serif;letter-spacing:-0.5px;">Alicia</div>
<div class="t" style="right:1053px;top:613.00px;font-size:11px;line-height:14px;color:#000;font-weight:normal;font-family:'Liberation Sans', sans-serif;letter-spacing:-0.15px;">83</div>
<div class="t" style="left:300px;top:613.00px;font-size:11px;line-height:14px;color:#000;font-weight:normal;font-family:'Liberation Sans', sans-serif;letter-spacing:-0.25px;">D7210</div>
<div class="t" style="left:341px;top:613.00px;font-size:11px;line-height:14px;color:#000;font-weight:normal;font-family:'Liberation Sans', sans-serif;letter-spacing:-0.2px;">24</div>
<div class="t" style="left:387px;top:613.00px;font-size:11px;line-height:14px;color:#000;font-weight:normal;font-family:'Liberation Sans', sans-serif;letter-spacing:-0.7px;">BRO00</div>
<div class="t" style="right:874px;top:613.00px;font-size:11px;line-height:14px;color:#000;font-weight:normal;font-family:'Liberation Sans', sans-serif;letter-spacing:-0.15px;">139.00</div>
<div class="t" style="right:827px;top:613.00px;font-size:11px;line-height:14px;color:#000;font-weight:normal;font-family:'Liberation Sans', sans-serif;letter-spacing:-0.15px;">139.00</div>
<div class="t" style="left:157px;top:630.00px;font-size:11px;line-height:14px;color:#000;font-weight:normal;font-family:'Liberation Sans', sans-serif;letter-spacing:0px;">7/1/2020</div>
<div class="t" style="left:222px;top:630.00px;font-size:11px;line-height:14px;color:#000;font-weight:normal;font-family:'Liberation Sans', sans-serif;letter-spacing:-0.5px;">Alicia</div>
<div class="t" style="right:1053px;top:630.00px;font-size:11px;line-height:14px;color:#000;font-weight:normal;font-family:'Liberation Sans', sans-serif;letter-spacing:-0.15px;">83</div>
<div class="t" style="left:300px;top:630.00px;font-size:11px;line-height:14px;color:#000;font-weight:normal;font-family:'Liberation Sans', sans-serif;letter-spacing:-0.25px;">D7210</div>
<div class="t" style="left:341px;top:630.00px;font-size:11px;line-height:14px;color:#000;font-weight:normal;font-family:'Liberation Sans', sans-serif;letter-spacing:-0.2px;">25</div>
<div class="t" style="left:387px;top:630.00px;font-size:11px;line-height:14px;color:#000;font-weight:normal;font-family:'Liberation Sans', sans-serif;letter-spacing:-0.7px;">BRO00</div>
<div class="t" style="right:874px;top:630.00px;font-size:11px;line-height:14px;color:#000;font-weight:normal;font-family:'Liberation Sans', sans-serif;letter-spacing:-0.15px;">139.00</div>
<div class="t" style="right:827px;top:630.00px;font-size:11px;line-height:14px;color:#000;font-weight:normal;font-family:'Liberation Sans', sans-serif;letter-spacing:-0.15px;">139.00</div>
<div class="t" style="left:157px;top:647.00px;font-size:11px;line-height:14px;color:#000;font-weight:normal;font-family:'Liberation Sans', sans-serif;letter-spacing:0px;">7/1/2020</div>
<div class="t" style="left:222px;top:647.00px;font-size:11px;line-height:14px;color:#000;font-weight:normal;font-family:'Liberation Sans', sans-serif;letter-spacing:-0.5px;">Alicia</div>
<div class="t" style="right:1053px;top:647.00px;font-size:11px;line-height:14px;color:#000;font-weight:normal;font-family:'Liberation Sans', sans-serif;letter-spacing:-0.15px;">83</div>
<div class="t" style="left:300px;top:647.00px;font-size:11px;line-height:14px;color:#000;font-weight:normal;font-family:'Liberation Sans', sans-serif;letter-spacing:-0.25px;">D7210</div>
<div class="t" style="left:341px;top:647.00px;font-size:11px;line-height:14px;color:#000;font-weight:normal;font-family:'Liberation Sans', sans-serif;letter-spacing:-0.2px;">26</div>
<div class="t" style="left:387px;top:647.00px;font-size:11px;line-height:14px;color:#000;font-weight:normal;font-family:'Liberation Sans', sans-serif;letter-spacing:-0.7px;">BRO00</div>
<div class="t" style="right:874px;top:647.00px;font-size:11px;line-height:14px;color:#000;font-weight:normal;font-family:'Liberation Sans', sans-serif;letter-spacing:-0.15px;">139.00</div>
<div class="t" style="right:827px;top:647.00px;font-size:11px;line-height:14px;color:#000;font-weight:normal;font-family:'Liberation Sans', sans-serif;letter-spacing:-0.15px;">139.00</div>
<div class="t" style="left:157px;top:664.00px;font-size:11px;line-height:14px;color:#000;font-weight:normal;font-family:'Liberation Sans', sans-serif;letter-spacing:0px;">7/1/2020</div>
<div class="t" style="left:222px;top:664.00px;font-size:11px;line-height:14px;color:#000;font-weight:normal;font-family:'Liberation Sans', sans-serif;letter-spacing:-0.5px;">Alicia</div>
<div class="t" style="right:1053px;top:664.00px;font-size:11px;line-height:14px;color:#000;font-weight:normal;font-family:'Liberation Sans', sans-serif;letter-spacing:-0.15px;">83</div>
<div class="t" style="left:300px;top:664.00px;font-size:11px;line-height:14px;color:#000;font-weight:normal;font-family:'Liberation Sans', sans-serif;letter-spacing:-0.25px;">D7210</div>
<div class="t" style="left:341px;top:664.00px;font-size:11px;line-height:14px;color:#000;font-weight:normal;font-family:'Liberation Sans', sans-serif;letter-spacing:-0.2px;">27</div>
<div class="t" style="left:387px;top:664.00px;font-size:11px;line-height:14px;color:#000;font-weight:normal;font-family:'Liberation Sans', sans-serif;letter-spacing:-0.7px;">BRO00</div>
<div class="t" style="right:874px;top:664.00px;font-size:11px;line-height:14px;color:#000;font-weight:normal;font-family:'Liberation Sans', sans-serif;letter-spacing:-0.15px;">139.00</div>
<div class="t" style="right:827px;top:664.00px;font-size:11px;line-height:14px;color:#000;font-weight:normal;font-family:'Liberation Sans', sans-serif;letter-spacing:-0.15px;">139.00</div>
<div class="t" style="left:157px;top:681.00px;font-size:11px;line-height:14px;color:#000;font-weight:normal;font-family:'Liberation Sans', sans-serif;letter-spacing:0px;">7/1/2020</div>
<div class="t" style="left:222px;top:681.00px;font-size:11px;line-height:14px;color:#000;font-weight:normal;font-family:'Liberation Sans', sans-serif;letter-spacing:-0.5px;">Alicia</div>
<div class="t" style="right:1053px;top:681.00px;font-size:11px;line-height:14px;color:#000;font-weight:normal;font-family:'Liberation Sans', sans-serif;letter-spacing:-0.15px;">83</div>
<div class="t" style="left:300px;top:681.00px;font-size:11px;line-height:14px;color:#000;font-weight:normal;font-family:'Liberation Sans', sans-serif;letter-spacing:-0.25px;">D7210</div>
<div class="t" style="left:341px;top:681.00px;font-size:11px;line-height:14px;color:#000;font-weight:normal;font-family:'Liberation Sans', sans-serif;letter-spacing:-0.2px;">28</div>
<div class="t" style="left:387px;top:681.00px;font-size:11px;line-height:14px;color:#000;font-weight:normal;font-family:'Liberation Sans', sans-serif;letter-spacing:-0.7px;">BRO00</div>
<div class="t" style="right:874px;top:681.00px;font-size:11px;line-height:14px;color:#000;font-weight:normal;font-family:'Liberation Sans', sans-serif;letter-spacing:-0.15px;">139.00</div>
<div class="t" style="right:827px;top:681.00px;font-size:11px;line-height:14px;color:#000;font-weight:normal;font-family:'Liberation Sans', sans-serif;letter-spacing:-0.15px;">139.00</div>
<div class="t" style="left:157px;top:698.00px;font-size:11px;line-height:14px;color:#000;font-weight:normal;font-family:'Liberation Sans', sans-serif;letter-spacing:0px;">7/1/2020</div>
<div class="t" style="left:222px;top:698.00px;font-size:11px;line-height:14px;color:#000;font-weight:normal;font-family:'Liberation Sans', sans-serif;letter-spacing:-0.5px;">Alicia</div>
<div class="t" style="right:1053px;top:698.00px;font-size:11px;line-height:14px;color:#000;font-weight:normal;font-family:'Liberation Sans', sans-serif;letter-spacing:-0.15px;">83</div>
<div class="t" style="left:300px;top:698.00px;font-size:11px;line-height:14px;color:#000;font-weight:normal;font-family:'Liberation Sans', sans-serif;letter-spacing:-0.25px;">D7210</div>
<div class="t" style="left:341px;top:698.00px;font-size:11px;line-height:14px;color:#000;font-weight:normal;font-family:'Liberation Sans', sans-serif;letter-spacing:-0.2px;">29</div>
<div class="t" style="left:387px;top:698.00px;font-size:11px;line-height:14px;color:#000;font-weight:normal;font-family:'Liberation Sans', sans-serif;letter-spacing:-0.7px;">BRO00</div>
<div class="t" style="right:874px;top:698.00px;font-size:11px;line-height:14px;color:#000;font-weight:normal;font-family:'Liberation Sans', sans-serif;letter-spacing:-0.15px;">139.00</div>
<div class="t" style="right:827px;top:698.00px;font-size:11px;line-height:14px;color:#000;font-weight:normal;font-family:'Liberation Sans', sans-serif;letter-spacing:-0.15px;">111.20</div>
<div class="t" style="right:686px;top:698.00px;font-size:11px;line-height:14px;color:#000;font-weight:normal;font-family:'Liberation Sans', sans-serif;letter-spacing:-0.15px;">27.80</div>
<div class="t" style="left:157px;top:715.00px;font-size:11px;line-height:14px;color:#000;font-weight:normal;font-family:'Liberation Sans', sans-serif;letter-spacing:0px;">7/1/2020</div>
<div class="t" style="left:222px;top:715.00px;font-size:11px;line-height:14px;color:#000;font-weight:normal;font-family:'Liberation Sans', sans-serif;letter-spacing:-0.5px;">Alicia</div>
<div class="t" style="right:1053px;top:715.00px;font-size:11px;line-height:14px;color:#000;font-weight:normal;font-family:'Liberation Sans', sans-serif;letter-spacing:-0.15px;">83</div>
<div class="t" style="left:300px;top:715.00px;font-size:11px;line-height:14px;color:#000;font-weight:normal;font-family:'Liberation Sans', sans-serif;letter-spacing:-0.25px;">D7210</div>
<div class="t" style="left:341px;top:715.00px;font-size:11px;line-height:14px;color:#000;font-weight:normal;font-family:'Liberation Sans', sans-serif;letter-spacing:-0.2px;">30</div>
<div class="t" style="left:387px;top:715.00px;font-size:11px;line-height:14px;color:#000;font-weight:normal;font-family:'Liberation Sans', sans-serif;letter-spacing:-0.7px;">BRO00</div>
<div class="t" style="right:874px;top:715.00px;font-size:11px;line-height:14px;color:#000;font-weight:normal;font-family:'Liberation Sans', sans-serif;letter-spacing:-0.15px;">139.00</div>
<div class="t" style="right:827px;top:715.00px;font-size:11px;line-height:14px;color:#000;font-weight:normal;font-family:'Liberation Sans', sans-serif;letter-spacing:-0.15px;">111.20</div>
<div class="t" style="right:686px;top:715.00px;font-size:11px;line-height:14px;color:#000;font-weight:normal;font-family:'Liberation Sans', sans-serif;letter-spacing:-0.15px;">27.80</div>
<div class="t" style="left:157px;top:732.00px;font-size:11px;line-height:14px;color:#000;font-weight:normal;font-family:'Liberation Sans', sans-serif;letter-spacing:0px;">7/1/2020</div>
<div class="t" style="left:222px;top:732.00px;font-size:11px;line-height:14px;color:#000;font-weight:normal;font-family:'Liberation Sans', sans-serif;letter-spacing:-0.5px;">Alicia</div>
<div class="t" style="right:1053px;top:732.00px;font-size:11px;line-height:14px;color:#000;font-weight:normal;font-family:'Liberation Sans', sans-serif;letter-spacing:-0.15px;">83</div>
<div class="t" style="left:300px;top:732.00px;font-size:11px;line-height:14px;color:#000;font-weight:normal;font-family:'Liberation Sans', sans-serif;letter-spacing:-0.25px;">D7210</div>
<div class="t" style="left:341px;top:732.00px;font-size:11px;line-height:14px;color:#000;font-weight:normal;font-family:'Liberation Sans', sans-serif;letter-spacing:-0.2px;">31</div>
<div class="t" style="left:387px;top:732.00px;font-size:11px;line-height:14px;color:#000;font-weight:normal;font-family:'Liberation Sans', sans-serif;letter-spacing:-0.7px;">BRO00</div>
<div class="t" style="right:874px;top:732.00px;font-size:11px;line-height:14px;color:#000;font-weight:normal;font-family:'Liberation Sans', sans-serif;letter-spacing:-0.15px;">139.00</div>
<div class="t" style="right:827px;top:732.00px;font-size:11px;line-height:14px;color:#000;font-weight:normal;font-family:'Liberation Sans', sans-serif;letter-spacing:-0.15px;">111.20</div>
<div class="t" style="right:686px;top:732.00px;font-size:11px;line-height:14px;color:#000;font-weight:normal;font-family:'Liberation Sans', sans-serif;letter-spacing:-0.15px;">27.80</div>
<div class="t" style="left:157px;top:749.00px;font-size:11px;line-height:14px;color:#000;font-weight:normal;font-family:'Liberation Sans', sans-serif;letter-spacing:0px;">7/1/2020</div>
<div class="t" style="left:222px;top:749.00px;font-size:11px;line-height:14px;color:#000;font-weight:normal;font-family:'Liberation Sans', sans-serif;letter-spacing:-0.5px;">Alicia</div>
<div class="t" style="right:1053px;top:749.00px;font-size:11px;line-height:14px;color:#000;font-weight:normal;font-family:'Liberation Sans', sans-serif;letter-spacing:-0.15px;">83</div>
<div class="t" style="left:300px;top:749.00px;font-size:11px;line-height:14px;color:#000;font-weight:normal;font-family:'Liberation Sans', sans-serif;letter-spacing:-0.25px;">D7210</div>
<div class="t" style="left:341px;top:749.00px;font-size:11px;line-height:14px;color:#000;font-weight:normal;font-family:'Liberation Sans', sans-serif;letter-spacing:-0.2px;">32</div>
<div class="t" style="left:387px;top:749.00px;font-size:11px;line-height:14px;color:#000;font-weight:normal;font-family:'Liberation Sans', sans-serif;letter-spacing:-0.7px;">BRO00</div>
<div class="t" style="right:874px;top:749.00px;font-size:11px;line-height:14px;color:#000;font-weight:normal;font-family:'Liberation Sans', sans-serif;letter-spacing:-0.15px;">139.00</div>
<div class="t" style="right:827px;top:749.00px;font-size:11px;line-height:14px;color:#000;font-weight:normal;font-family:'Liberation Sans', sans-serif;letter-spacing:-0.15px;">111.20</div>
<div class="t" style="right:686px;top:749.00px;font-size:11px;line-height:14px;color:#000;font-weight:normal;font-family:'Liberation Sans', sans-serif;letter-spacing:-0.15px;">27.80</div>
<div class="t" style="left:157px;top:766.00px;font-size:11px;line-height:14px;color:#000;font-weight:normal;font-family:'Liberation Sans', sans-serif;letter-spacing:0px;">7/1/2020</div>
<div class="t" style="left:222px;top:766.00px;font-size:11px;line-height:14px;color:#000;font-weight:normal;font-family:'Liberation Sans', sans-serif;letter-spacing:-0.5px;">Alicia</div>
<div class="t" style="right:1053px;top:766.00px;font-size:11px;line-height:14px;color:#000;font-weight:normal;font-family:'Liberation Sans', sans-serif;letter-spacing:-0.15px;">83</div>
<div class="t" style="left:300px;top:766.00px;font-size:11px;line-height:14px;color:#000;font-weight:normal;font-family:'Liberation Sans', sans-serif;letter-spacing:-0.25px;">D4341</div>
<div class="t" style="left:341px;top:766.00px;font-size:11px;line-height:14px;color:#000;font-weight:normal;font-family:'Liberation Sans', sans-serif;letter-spacing:-0.2px;">UR</div>
<div class="t" style="left:387px;top:766.00px;font-size:11px;line-height:14px;color:#000;font-weight:normal;font-family:'Liberation Sans', sans-serif;letter-spacing:-0.7px;">BRO00</div>
<div class="t" style="right:874px;top:766.00px;font-size:11px;line-height:14px;color:#000;font-weight:normal;font-family:'Liberation Sans', sans-serif;letter-spacing:-0.15px;">112.50</div>
<div class="t" style="right:827px;top:766.00px;font-size:11px;line-height:14px;color:#000;font-weight:normal;font-family:'Liberation Sans', sans-serif;letter-spacing:-0.15px;">90.00</div>
<div class="t" style="right:686px;top:766.00px;font-size:11px;line-height:14px;color:#000;font-weight:normal;font-family:'Liberation Sans', sans-serif;letter-spacing:-0.15px;">22.50</div>
<div class="t" style="left:157px;top:783.00px;font-size:11px;line-height:14px;color:#000;font-weight:normal;font-family:'Liberation Sans', sans-serif;letter-spacing:0px;">7/1/2020</div>
<div class="t" style="left:222px;top:783.00px;font-size:11px;line-height:14px;color:#000;font-weight:normal;font-family:'Liberation Sans', sans-serif;letter-spacing:-0.5px;">Alicia</div>
<div class="t" style="right:1053px;top:783.00px;font-size:11px;line-height:14px;color:#000;font-weight:normal;font-family:'Liberation Sans', sans-serif;letter-spacing:-0.15px;">83</div>
<div class="t" style="left:300px;top:783.00px;font-size:11px;line-height:14px;color:#000;font-weight:normal;font-family:'Liberation Sans', sans-serif;letter-spacing:-0.25px;">D4341</div>
<div class="t" style="left:341px;top:783.00px;font-size:11px;line-height:14px;color:#000;font-weight:normal;font-family:'Liberation Sans', sans-serif;letter-spacing:-0.2px;">LR</div>
<div class="t" style="left:387px;top:783.00px;font-size:11px;line-height:14px;color:#000;font-weight:normal;font-family:'Liberation Sans', sans-serif;letter-spacing:-0.7px;">BRO00</div>
<div class="t" style="right:874px;top:783.00px;font-size:11px;line-height:14px;color:#000;font-weight:normal;font-family:'Liberation Sans', sans-serif;letter-spacing:-0.15px;">112.50</div>
<div class="t" style="right:827px;top:783.00px;font-size:11px;line-height:14px;color:#000;font-weight:normal;font-family:'Liberation Sans', sans-serif;letter-spacing:-0.15px;">90.00</div>
<div class="t" style="right:686px;top:783.00px;font-size:11px;line-height:14px;color:#000;font-weight:normal;font-family:'Liberation Sans', sans-serif;letter-spacing:-0.15px;">22.50</div>
<div class="t" style="left:157px;top:800.00px;font-size:11px;line-height:14px;color:#000;font-weight:normal;font-family:'Liberation Sans', sans-serif;letter-spacing:0px;">7/1/2020</div>
<div class="t" style="left:222px;top:800.00px;font-size:11px;line-height:14px;color:#000;font-weight:normal;font-family:'Liberation Sans', sans-serif;letter-spacing:-0.5px;">Alicia</div>
<div class="t" style="right:1053px;top:800.00px;font-size:11px;line-height:14px;color:#000;font-weight:normal;font-family:'Liberation Sans', sans-serif;letter-spacing:-0.15px;">83</div>
<div class="t" style="left:300px;top:800.00px;font-size:11px;line-height:14px;color:#000;font-weight:normal;font-family:'Liberation Sans', sans-serif;letter-spacing:-0.25px;">D4341</div>
<div class="t" style="left:341px;top:800.00px;font-size:11px;line-height:14px;color:#000;font-weight:normal;font-family:'Liberation Sans', sans-serif;letter-spacing:-0.2px;">UL</div>
<div class="t" style="left:387px;top:800.00px;font-size:11px;line-height:14px;color:#000;font-weight:normal;font-family:'Liberation Sans', sans-serif;letter-spacing:-0.7px;">BRO00</div>
<div class="t" style="right:874px;top:800.00px;font-size:11px;line-height:14px;color:#000;font-weight:normal;font-family:'Liberation Sans', sans-serif;letter-spacing:-0.15px;">112.50</div>
<div class="t" style="right:827px;top:800.00px;font-size:11px;line-height:14px;color:#000;font-weight:normal;font-family:'Liberation Sans', sans-serif;letter-spacing:-0.15px;">90.00</div>
<div class="t" style="right:686px;top:800.00px;font-size:11px;line-height:14px;color:#000;font-weight:normal;font-family:'Liberation Sans', sans-serif;letter-spacing:-0.15px;">22.50</div>
<div class="t" style="left:157px;top:817.00px;font-size:11px;line-height:14px;color:#000;font-weight:normal;font-family:'Liberation Sans', sans-serif;letter-spacing:0px;">7/1/2020</div>
<div class="t" style="left:222px;top:817.00px;font-size:11px;line-height:14px;color:#000;font-weight:normal;font-family:'Liberation Sans', sans-serif;letter-spacing:-0.5px;">Alicia</div>
<div class="t" style="right:1053px;top:817.00px;font-size:11px;line-height:14px;color:#000;font-weight:normal;font-family:'Liberation Sans', sans-serif;letter-spacing:-0.15px;">83</div>
<div class="t" style="left:300px;top:817.00px;font-size:11px;line-height:14px;color:#000;font-weight:normal;font-family:'Liberation Sans', sans-serif;letter-spacing:-0.25px;">D4341</div>
<div class="t" style="left:341px;top:817.00px;font-size:11px;line-height:14px;color:#000;font-weight:normal;font-family:'Liberation Sans', sans-serif;letter-spacing:-0.2px;">LL</div>
<div class="t" style="left:387px;top:817.00px;font-size:11px;line-height:14px;color:#000;font-weight:normal;font-family:'Liberation Sans', sans-serif;letter-spacing:-0.7px;">BRO00</div>
<div class="t" style="right:874px;top:817.00px;font-size:11px;line-height:14px;color:#000;font-weight:normal;font-family:'Liberation Sans', sans-serif;letter-spacing:-0.15px;">112.50</div>
<div class="t" style="right:827px;top:817.00px;font-size:11px;line-height:14px;color:#000;font-weight:normal;font-family:'Liberation Sans', sans-serif;letter-spacing:-0.15px;">90.00</div>
<div class="t" style="right:686px;top:817.00px;font-size:11px;line-height:14px;color:#000;font-weight:normal;font-family:'Liberation Sans', sans-serif;letter-spacing:-0.15px;">22.50</div>
<div class="t" style="left:157px;top:834.00px;font-size:11px;line-height:14px;color:#000;font-weight:normal;font-family:'Liberation Sans', sans-serif;letter-spacing:0px;">7/1/2020</div>
<div class="t" style="left:222px;top:834.00px;font-size:11px;line-height:14px;color:#000;font-weight:normal;font-family:'Liberation Sans', sans-serif;letter-spacing:-0.5px;">Alicia</div>
<div class="t" style="right:1053px;top:834.00px;font-size:11px;line-height:14px;color:#000;font-weight:normal;font-family:'Liberation Sans', sans-serif;letter-spacing:-0.15px;">83</div>
<div class="t" style="left:300px;top:834.00px;font-size:11px;line-height:14px;color:#000;font-weight:normal;font-family:'Liberation Sans', sans-serif;letter-spacing:-0.25px;">D0180</div>
<div class="t" style="left:387px;top:834.00px;font-size:11px;line-height:14px;color:#000;font-weight:normal;font-family:'Liberation Sans', sans-serif;letter-spacing:-0.7px;">BRO00</div>
<div class="t" style="right:874px;top:834.00px;font-size:11px;line-height:14px;color:#000;font-weight:normal;font-family:'Liberation Sans', sans-serif;letter-spacing:-0.15px;">60.00</div>
<div class="t" style="right:827px;top:834.00px;font-size:11px;line-height:14px;color:#000;font-weight:normal;font-family:'Liberation Sans', sans-serif;letter-spacing:-0.15px;">60.00</div>
<div class="t" style="left:157px;top:851.00px;font-size:11px;line-height:14px;color:#000;font-weight:normal;font-family:'Liberation Sans', sans-serif;letter-spacing:0px;">7/1/2020</div>
<div class="t" style="left:222px;top:851.00px;font-size:11px;line-height:14px;color:#000;font-weight:normal;font-family:'Liberation Sans', sans-serif;letter-spacing:-0.5px;">Alicia</div>
<div class="t" style="right:1053px;top:851.00px;font-size:11px;line-height:14px;color:#000;font-weight:normal;font-family:'Liberation Sans', sans-serif;letter-spacing:-0.15px;">83</div>
<div class="t" style="left:300px;top:851.00px;font-size:11px;line-height:14px;color:#000;font-weight:normal;font-family:'Liberation Sans', sans-serif;letter-spacing:-0.25px;">D4381</div>
<div class="t" style="left:387px;top:851.00px;font-size:11px;line-height:14px;color:#000;font-weight:normal;font-family:'Liberation Sans', sans-serif;letter-spacing:-0.7px;">BRO00</div>
<div class="t" style="right:874px;top:851.00px;font-size:11px;line-height:14px;color:#000;font-weight:normal;font-family:'Liberation Sans', sans-serif;letter-spacing:-0.15px;">49.50</div>
<div class="t" style="right:827px;top:851.00px;font-size:11px;line-height:14px;color:#000;font-weight:normal;font-family:'Liberation Sans', sans-serif;letter-spacing:-0.15px;">39.60</div>
<div class="t" style="right:686px;top:851.00px;font-size:11px;line-height:14px;color:#000;font-weight:normal;font-family:'Liberation Sans', sans-serif;letter-spacing:-0.15px;">9.90</div>
<div class="t" style="left:157px;top:868.00px;font-size:11px;line-height:14px;color:#000;font-weight:normal;font-family:'Liberation Sans', sans-serif;letter-spacing:0px;">7/1/2020</div>
<div class="t" style="left:222px;top:868.00px;font-size:11px;line-height:14px;color:#000;font-weight:normal;font-family:'Liberation Sans', sans-serif;letter-spacing:-0.5px;">Alicia</div>
<div class="t" style="right:1053px;top:868.00px;font-size:11px;line-height:14px;color:#000;font-weight:normal;font-family:'Liberation Sans', sans-serif;letter-spacing:-0.15px;">83</div>
<div class="t" style="left:300px;top:868.00px;font-size:11px;line-height:14px;color:#000;font-weight:normal;font-family:'Liberation Sans', sans-serif;letter-spacing:-0.25px;">D6104</div>
<div class="t" style="left:387px;top:868.00px;font-size:11px;line-height:14px;color:#000;font-weight:normal;font-family:'Liberation Sans', sans-serif;letter-spacing:-0.7px;">BRO00</div>
<div class="r" style="left:154px;top:938px;width:855px;height:1px;background:#000"></div>
<div class="r" style="left:154px;top:939px;width:855px;height:18px;background:linear-gradient(#f7f7f7,#e9e9e9)"></div>
<div class="r" style="left:154px;top:939px;width:1px;height:18px;background:#6a6a6a"></div>
<div class="r" style="left:1008px;top:939px;width:1px;height:18px;background:#000"></div>
<div class="r" style="left:154px;top:957px;width:855px;height:1px;background:#000"></div>
<div class="sunk" style="left:430px;top:941px;width:45px;height:15px"></div>
<div class="sunk" style="left:477px;top:941px;width:45px;height:15px"></div>
<div class="sunk" style="left:524px;top:941px;width:45px;height:15px"></div>
<div class="sunk" style="left:571px;top:941px;width:45px;height:15px"></div>
<div class="sunk" style="left:618px;top:941px;width:45px;height:15px"></div>
<div class="sunk" style="left:665px;top:941px;width:45px;height:15px"></div>
<div class="sunk" style="left:712px;top:941px;width:45px;height:15px"></div>
<div class="sunk" style="left:759px;top:941px;width:45px;height:15px"></div>
<div class="sunk" style="left:853px;top:941px;width:45px;height:15px"></div>
<div class="sunk" style="left:900px;top:941px;width:54px;height:15px"></div>
<div class="sunk" style="left:956px;top:941px;width:51px;height:15px"></div>
<div class="t" style="right:875px;top:942.00px;font-size:11px;line-height:14px;color:#000;font-weight:normal;font-family:'Liberation Sans', sans-serif;letter-spacing:-0.2px;">4977.00</div>
<div class="t" style="right:828px;top:942.00px;font-size:11px;line-height:14px;color:#000;font-weight:normal;font-family:'Liberation Sans', sans-serif;letter-spacing:-0.2px;">3415.90</div>
<div class="t" style="right:781px;top:942.00px;font-size:11px;line-height:14px;color:#000;font-weight:normal;font-family:'Liberation Sans', sans-serif;letter-spacing:-0.2px;">0.00</div>
<div class="t" style="right:734px;top:942.00px;font-size:11px;line-height:14px;color:#000;font-weight:normal;font-family:'Liberation Sans', sans-serif;letter-spacing:-0.2px;">0.00</div>
<div class="t" style="right:687px;top:942.00px;font-size:11px;line-height:14px;color:#000;font-weight:normal;font-family:'Liberation Sans', sans-serif;letter-spacing:-0.2px;">1561.10</div>
<div class="t" style="right:640px;top:942.00px;font-size:11px;line-height:14px;color:#000;font-weight:normal;font-family:'Liberation Sans', sans-serif;letter-spacing:-0.2px;">0.00</div>
<div class="t" style="right:593px;top:942.00px;font-size:11px;line-height:14px;color:#000;font-weight:normal;font-family:'Liberation Sans', sans-serif;letter-spacing:-0.2px;">0.00</div>
<div class="t" style="left:761px;top:942.00px;font-size:11px;line-height:14px;color:#000;font-weight:normal;font-family:'Liberation Sans', sans-serif;letter-spacing:-0.2px;">4977.00</div>
<div class="t" style="right:452px;top:942.00px;font-size:11px;line-height:14px;color:#000;font-weight:normal;font-family:'Liberation Sans', sans-serif;letter-spacing:-0.2px;">1561.10</div>
<div class="t" style="right:396px;top:942.00px;font-size:11px;line-height:14px;color:#000;font-weight:normal;font-family:'Liberation Sans', sans-serif;letter-spacing:-0.2px;">-1561.10</div>
<div class="t" style="right:343px;top:942.00px;font-size:11px;line-height:14px;color:#000;font-weight:normal;font-family:'Liberation Sans', sans-serif;letter-spacing:-0.2px;">0.00</div>
<div class="r" style="left:154px;top:958px;width:855px;height:19px;background:#000"></div>
<div class="r" style="left:155px;top:958px;width:64px;height:18px;background:#ece9d8"></div>
<div class="t" style="left:156.5px;top:961.00px;font-size:11px;line-height:14px;color:#000;font-weight:normal;font-family:'Liberation Sans', sans-serif;letter-spacing:-0.35px;">Date</div>
<div class="r" style="left:220px;top:958px;width:46px;height:18px;background:#ece9d8"></div>
<div class="t" style="left:221.5px;top:961.00px;font-size:11px;line-height:14px;color:#000;font-weight:normal;font-family:'Liberation Sans', sans-serif;letter-spacing:-0.35px;">Name</div>
<div class="r" style="left:267px;top:958px;width:30px;height:18px;background:#ece9d8"></div>
<div class="t" style="left:268.5px;top:961.00px;font-size:11px;line-height:14px;color:#000;font-weight:normal;font-family:'Liberation Sans', sans-serif;letter-spacing:-0.35px;">Billing</div>
<div class="r" style="left:298px;top:958px;width:40px;height:18px;background:#ece9d8"></div>
<div class="t" style="left:299.5px;top:961.00px;font-size:11px;line-height:14px;color:#000;font-weight:normal;font-family:'Liberation Sans', sans-serif;letter-spacing:-0.35px;">Code</div>
<div class="r" style="left:339px;top:958px;width:20px;height:18px;background:#ece9d8"></div>
<div class="t" style="left:340.5px;top:961.00px;font-size:11px;line-height:14px;color:#000;font-weight:normal;font-family:'Liberation Sans', sans-serif;letter-spacing:-0.35px;">Tth</div>
<div class="r" style="left:360px;top:958px;width:24px;height:18px;background:#ece9d8"></div>
<div class="t" style="left:361.5px;top:961.00px;font-size:11px;line-height:14px;color:#000;font-weight:normal;font-family:'Liberation Sans', sans-serif;letter-spacing:-0.35px;">Surf</div>
<div class="r" style="left:385px;top:958px;width:44px;height:18px;background:#ece9d8"></div>
<div class="t" style="left:386.5px;top:961.00px;font-size:11px;line-height:14px;color:#000;font-weight:normal;font-family:'Liberation Sans', sans-serif;letter-spacing:-0.35px;">Provider</div>
<div class="r" style="left:430px;top:958px;width:46px;height:18px;background:#ece9d8"></div>
<div class="t" style="left:431.5px;top:961.00px;font-size:11px;line-height:14px;color:#000;font-weight:normal;font-family:'Liberation Sans', sans-serif;letter-spacing:-0.35px;">Fee</div>
<div class="r" style="left:477px;top:958px;width:46px;height:18px;background:#ece9d8"></div>
<div class="t" style="left:478.5px;top:961.00px;font-size:11px;line-height:14px;color:#000;font-weight:normal;font-family:'Liberation Sans', sans-serif;letter-spacing:-0.35px;">Ins Est</div>
<div class="r" style="left:524px;top:958px;width:46px;height:18px;background:#ece9d8"></div>
<div class="t" style="left:525.5px;top:961.00px;font-size:11px;line-height:14px;color:#000;font-weight:normal;font-family:'Liberation Sans', sans-serif;letter-spacing:-0.35px;">Ins Adj</div>
<div class="r" style="left:571px;top:958px;width:46px;height:18px;background:#ece9d8"></div>
<div class="t" style="left:572.5px;top:961.00px;font-size:11px;line-height:14px;color:#000;font-weight:normal;font-family:'Liberation Sans', sans-serif;letter-spacing:-0.35px;">Ins Paid</div>
<div class="r" style="left:618px;top:958px;width:46px;height:18px;background:#ece9d8"></div>
<div class="t" style="left:619.5px;top:961.00px;font-size:11px;line-height:14px;color:#000;font-weight:normal;font-family:'Liberation Sans', sans-serif;letter-spacing:-0.35px;">Pat Est</div>
<div class="r" style="left:665px;top:958px;width:46px;height:18px;background:#ece9d8"></div>
<div class="t" style="left:666.5px;top:961.00px;font-size:11px;line-height:14px;color:#000;font-weight:normal;font-family:'Liberation Sans', sans-serif;letter-spacing:-0.35px;">Pat Adj</div>
<div class="r" style="left:712px;top:958px;width:46px;height:18px;background:#ece9d8"></div>
<div class="t" style="left:713.5px;top:961.00px;font-size:11px;line-height:14px;color:#000;font-weight:normal;font-family:'Liberation Sans', sans-serif;letter-spacing:-0.35px;">Pat Paid</div>
<div class="r" style="left:759px;top:958px;width:46px;height:18px;background:#ece9d8"></div>
<div class="t" style="left:760.5px;top:961.00px;font-size:11px;line-height:14px;color:#000;font-weight:normal;font-family:'Liberation Sans', sans-serif;letter-spacing:-0.35px;">Balance</div>
<div class="r" style="left:806px;top:958px;width:46px;height:18px;background:#ece9d8"></div>
<div class="t" style="left:807.5px;top:961.00px;font-size:11px;line-height:14px;color:#000;font-weight:normal;font-family:'Liberation Sans', sans-serif;letter-spacing:-0.35px;">Ins Due</div>
<div class="r" style="left:853px;top:958px;width:46px;height:18px;background:#ece9d8"></div>
<div class="t" style="left:854.5px;top:961.00px;font-size:11px;line-height:14px;color:#000;font-weight:normal;font-family:'Liberation Sans', sans-serif;letter-spacing:-0.35px;">Pat Due</div>
<div class="r" style="left:900px;top:958px;width:55px;height:18px;background:#ece9d8"></div>
<div class="t" style="left:901.5px;top:961.00px;font-size:11px;line-height:14px;color:#000;font-weight:normal;font-family:'Liberation Sans', sans-serif;letter-spacing:-0.35px;">Pmt Today</div>
<div class="r" style="left:956px;top:958px;width:52px;height:18px;background:#ece9d8"></div>
<div class="t" style="left:957.5px;top:961.00px;font-size:11px;line-height:14px;color:#000;font-weight:normal;font-family:'Liberation Sans', sans-serif;letter-spacing:-0.35px;">Adj Today</div>
<div class="r" style="left:1009px;top:931px;width:56px;height:27px;background:linear-gradient(#d8d8d8,#fff);border-right:1px solid #888;border-bottom:1px solid #888"></div>
<div class="r" style="left:1049px;top:931px;width:16px;height:27px;background:#e4e4e4"></div>
<svg class="r" style="left:1049px;top:944px" width="16" height="10"><path d="M3.5 2.5 L7.5 6.5 L11.5 2.5" stroke="#555" stroke-width="2" fill="none"/></svg>
<div class="r" style="left:801.3px;top:988.3px;width:11px;height:11px;border:1.3px solid #333;border-radius:1.5px;background:#fff"></div>
<div class="t" style="left:820px;top:988.50px;font-size:11px;line-height:14px;color:#000;font-weight:normal;font-family:'Liberation Sans', sans-serif;letter-spacing:-0.05px;">Default to the Ledger Selection</div>
<div class="r" style="left:677px;top:159px;width:627px;height:773px;background:#fff;border:1px solid #5a5a5a;box-sizing:border-box;box-shadow:0 2px 14px rgba(0,0,0,0.35)"></div>
<div class="r" style="left:679px;top:191px;width:624px;height:739px;border-top:1px solid #dcdcdc;border-right:2px solid #6e6e6e;border-bottom:2px solid #6e6e6e;border-left:1px solid #e6e6e6;box-sizing:border-box"></div>
<svg class="r" style="left:685px;top:165px" width="18" height="18"><circle cx="9" cy="8.9" r="7.6" fill="#fff" stroke="#1b2b6f" stroke-width="1.3"/><path d="M6.6 4 H10.6 C13.2 4 14.4 5.8 13.9 8.5 C13.3 11.8 11.2 13.8 8 13.8 H4.9 Z M8.6 6.7 L7.6 11.1 H8.5 C9.9 11.1 10.8 10.1 11 8.7 C11.2 7.4 10.7 6.7 9.6 6.7 Z" fill="#1b2b6f" fill-rule="evenodd"/></svg>
<div class="t" style="left:707.5px;top:167.50px;font-size:12px;line-height:15px;color:#000;font-weight:normal;font-family:'Liberation Sans', sans-serif;letter-spacing:-0.3px;">Process Credit Card</div>
<div class="r" style="left:1184px;top:174px;width:10px;height:1px;background:#b0b0b0"></div>
<div class="r" style="left:1229px;top:169px;width:8px;height:8px;border:1.2px solid #000"></div>
<svg class="r" style="left:1274px;top:168px" width="12" height="12"><path d="M1 1 L11 11 M11 1 L1 11" stroke="#000" stroke-width="1.2"/></svg>
<div class="t" style="left:690.4px;top:194.00px;font-size:16px;line-height:20px;color:#000;font-weight:bold;font-family:'Liberation Sans', sans-serif;letter-spacing:0.1px;">Card Processed</div>
<div class="t" style="left:697.5px;top:215.50px;font-size:13px;line-height:17px;color:#000;font-weight:normal;font-family:'Liberation Sans', sans-serif;letter-spacing:-0.1px;">Charged Amount: 1561.10</div>
<div class="t" style="left:697.5px;top:231.50px;font-size:13px;line-height:17px;color:#000;font-weight:normal;font-family:'Liberation Sans', sans-serif;letter-spacing:-0.1px;">Response: Approval</div>
<div class="r" style="left:692.5px;top:313.6px;width:86px;height:24px;background:#0b95c9;border-right:1px solid #9ab;border-bottom:1px solid #9ab;box-sizing:border-box"></div>
<div class="t" style="left:735.5px;transform:translateX(-50%);top:318.50px;font-size:12px;line-height:15px;color:#fff;font-weight:normal;font-family:'Liberation Sans', sans-serif;">Hide Receipt</div>
<div class="r" style="left:944.2px;top:313.6px;width:75px;height:24px;background:#0b95c9;border-right:1px solid #9ab;border-bottom:1px solid #9ab;box-sizing:border-box"></div>
<div class="t" style="left:981.5px;transform:translateX(-50%);top:318.50px;font-size:12px;line-height:15px;color:#fff;font-weight:normal;font-family:'Liberation Sans', sans-serif;">Close</div>
<div class="t" style="left:698.4px;top:345.50px;font-size:16px;line-height:20px;color:#000;font-weight:bold;font-family:'Liberation Sans', sans-serif;letter-spacing:0.45px;">Receipt</div>
<div class="r" style="left:698px;top:370px;width:336px;height:424px;border-left:2px solid #777;border-top:2px solid #777;border-right:1px solid #ddd;border-bottom:1px solid #ddd;box-sizing:border-box;background:#fff;overflow:hidden">
<div class="t" style="left:2px;top:-0.20px;font-size:13.33px;line-height:17px;color:#000;font-weight:normal;font-family:'Liberation Mono', monospace;-webkit-text-stroke:0;">&nbsp;&nbsp;&nbsp;&nbsp;&nbsp;&nbsp;&nbsp;&nbsp;&nbsp;&nbsp;&nbsp;&nbsp;&nbsp;Sale&nbsp;Receipt</div>
<div class="t" style="left:2px;top:25.80px;font-size:13.33px;line-height:17px;color:#000;font-weight:normal;font-family:'Liberation Mono', monospace;-webkit-text-stroke:0;">&nbsp;&nbsp;&nbsp;&nbsp;&nbsp;&nbsp;&nbsp;&nbsp;&nbsp;&nbsp;Dr.&nbsp;Emmett&nbsp;Brown&nbsp;DMD</div>
<div class="t" style="left:2px;top:38.80px;font-size:13.33px;line-height:17px;color:#000;font-weight:normal;font-family:'Liberation Mono', monospace;-webkit-text-stroke:0;">&nbsp;4115&nbsp;E.&nbsp;Valley&nbsp;Auto&nbsp;Drive,&nbsp;Suite&nbsp;101,</div>
<div class="t" style="left:2px;top:51.80px;font-size:13.33px;line-height:17px;color:#000;font-weight:normal;font-family:'Liberation Mono', monospace;-webkit-text-stroke:0;">&nbsp;&nbsp;&nbsp;&nbsp;&nbsp;&nbsp;&nbsp;&nbsp;&nbsp;&nbsp;&nbsp;&nbsp;Mesa,&nbsp;AZ&nbsp;&nbsp;85206</div>
<div class="t" style="left:2px;top:64.80px;font-size:13.33px;line-height:17px;color:#000;font-weight:normal;font-family:'Liberation Mono', monospace;-webkit-text-stroke:0;">&nbsp;&nbsp;&nbsp;&nbsp;&nbsp;&nbsp;&nbsp;&nbsp;&nbsp;&nbsp;&nbsp;&nbsp;&nbsp;(800)&nbsp;704-8494</div>
<div class="t" style="left:2px;top:90.80px;font-size:13.33px;line-height:17px;color:#000;font-weight:normal;font-family:'Liberation Mono', monospace;-webkit-text-stroke:0;">Batch&nbsp;#&nbsp;&nbsp;&nbsp;&nbsp;&nbsp;&nbsp;&nbsp;&nbsp;&nbsp;&nbsp;&nbsp;&nbsp;&nbsp;000047</div>
<div class="t" style="left:2px;top:103.80px;font-size:13.33px;line-height:17px;color:#000;font-weight:normal;font-family:'Liberation Mono', monospace;-webkit-text-stroke:0;">Trans&nbsp;ID&nbsp;&nbsp;&nbsp;&nbsp;&nbsp;&nbsp;&nbsp;&nbsp;&nbsp;&nbsp;&nbsp;&nbsp;000000006378</div>
<div class="t" style="left:2px;top:116.80px;font-size:13.33px;line-height:17px;color:#000;font-weight:normal;font-family:'Liberation Mono', monospace;-webkit-text-stroke:0;">Order&nbsp;ID&nbsp;&nbsp;&nbsp;&nbsp;&nbsp;&nbsp;&nbsp;&nbsp;&nbsp;&nbsp;&nbsp;&nbsp;201002153049579</div>
<div class="t" style="left:2px;top:129.80px;font-size:13.33px;line-height:17px;color:#000;font-weight:normal;font-family:'Liberation Mono', monospace;-webkit-text-stroke:0;">Trans&nbsp;Type&nbsp;&nbsp;&nbsp;&nbsp;&nbsp;&nbsp;&nbsp;&nbsp;&nbsp;&nbsp;Purchase</div>
<div class="t" style="left:2px;top:142.80px;font-size:13.33px;line-height:17px;color:#000;font-weight:normal;font-family:'Liberation Mono', monospace;-webkit-text-stroke:0;">Date/Time&nbsp;&nbsp;&nbsp;&nbsp;&nbsp;&nbsp;&nbsp;&nbsp;&nbsp;&nbsp;&nbsp;2020-10-02&nbsp;17:32:59</div>
<div class="t" style="left:2px;top:155.80px;font-size:13.33px;line-height:17px;color:#000;font-weight:normal;font-family:'Liberation Mono', monospace;-webkit-text-stroke:0;">Card&nbsp;Type&nbsp;&nbsp;&nbsp;&nbsp;&nbsp;&nbsp;&nbsp;&nbsp;&nbsp;&nbsp;&nbsp;Visa</div>
<div class="t" style="left:2px;top:168.80px;font-size:13.33px;line-height:17px;color:#000;font-weight:normal;font-family:'Liberation Mono', monospace;-webkit-text-stroke:0;">Card&nbsp;Number&nbsp;&nbsp;&nbsp;&nbsp;&nbsp;&nbsp;&nbsp;&nbsp;&nbsp;XXXXXXXXXXXX0135</div>
<div class="t" style="left:2px;top:181.80px;font-size:13.33px;line-height:17px;color:#000;font-weight:normal;font-family:'Liberation Mono', monospace;-webkit-text-stroke:0;">Entry&nbsp;Method&nbsp;&nbsp;&nbsp;&nbsp;&nbsp;&nbsp;&nbsp;&nbsp;MANUAL</div>
<div class="t" style="left:2px;top:194.80px;font-size:13.33px;line-height:17px;color:#000;font-weight:normal;font-family:'Liberation Mono', monospace;-webkit-text-stroke:0;">Approval&nbsp;Code&nbsp;&nbsp;&nbsp;&nbsp;&nbsp;&nbsp;&nbsp;066164</div>
<div class="t" style="left:2px;top:207.80px;font-size:13.33px;line-height:17px;color:#000;font-weight:normal;font-family:'Liberation Mono', monospace;-webkit-text-stroke:0;">AVS&nbsp;&nbsp;&nbsp;&nbsp;&nbsp;&nbsp;&nbsp;&nbsp;&nbsp;&nbsp;&nbsp;&nbsp;&nbsp;&nbsp;&nbsp;&nbsp;&nbsp;R</div>
<div class="t" style="left:2px;top:220.80px;font-size:13.33px;line-height:17px;color:#000;font-weight:normal;font-family:'Liberation Mono', monospace;-webkit-text-stroke:0;">CVV&nbsp;&nbsp;&nbsp;&nbsp;&nbsp;&nbsp;&nbsp;&nbsp;&nbsp;&nbsp;&nbsp;&nbsp;&nbsp;&nbsp;&nbsp;&nbsp;&nbsp;P</div>
<div class="t" style="left:2px;top:246.80px;font-size:13.33px;line-height:17px;color:#000;font-weight:normal;font-family:'Liberation Mono', monospace;-webkit-text-stroke:0;">Total&nbsp;Amount&nbsp;&nbsp;&nbsp;&nbsp;&nbsp;&nbsp;&nbsp;&nbsp;$1561.10</div>
<div class="t" style="left:2px;top:272.80px;font-size:13.33px;line-height:17px;color:#000;font-weight:normal;font-family:'Liberation Mono', monospace;-webkit-text-stroke:0;">&nbsp;&nbsp;&nbsp;&nbsp;&nbsp;&nbsp;&nbsp;&nbsp;&nbsp;&nbsp;Approved&nbsp;-&nbsp;Thank&nbsp;You</div>
<div class="t" style="left:2px;top:298.80px;font-size:13.33px;line-height:17px;color:#000;font-weight:normal;font-family:'Liberation Mono', monospace;-webkit-text-stroke:0;">&nbsp;X____________________________________</div>
<div class="t" style="left:2px;top:311.80px;font-size:13.33px;line-height:17px;color:#000;font-weight:normal;font-family:'Liberation Mono', monospace;-webkit-text-stroke:0;">&nbsp;&nbsp;&nbsp;&nbsp;&nbsp;&nbsp;Signature:&nbsp;Alicia&nbsp;Dieujuste</div>
<div class="t" style="left:2px;top:337.80px;font-size:13.33px;line-height:17px;color:#000;font-weight:normal;font-family:'Liberation Mono', monospace;-webkit-text-stroke:0;">Buyer&nbsp;agrees&nbsp;to&nbsp;pay&nbsp;total&nbsp;amount&nbsp;above</div>
<div class="t" style="left:2px;top:350.80px;font-size:13.33px;line-height:17px;color:#000;font-weight:normal;font-family:'Liberation Mono', monospace;-webkit-text-stroke:0;">according&nbsp;to&nbsp;cardholder's&nbsp;agreement&nbsp;with</div>
<div class="t" style="left:2px;top:363.80px;font-size:13.33px;line-height:17px;color:#000;font-weight:normal;font-family:'Liberation Mono', monospace;-webkit-text-stroke:0;">issuer.</div>
<div class="t" style="left:2px;top:389.80px;font-size:13.33px;line-height:17px;color:#000;font-weight:normal;font-family:'Liberation Mono', monospace;-webkit-text-stroke:0;">&nbsp;&nbsp;&nbsp;&nbsp;&nbsp;&nbsp;&nbsp;&nbsp;&nbsp;&nbsp;&nbsp;&nbsp;&nbsp;&nbsp;&nbsp;Thank&nbsp;You!</div>
<div class="t" style="left:2px;top:415.80px;font-size:13.33px;line-height:17px;color:#000;font-weight:normal;font-family:'Liberation Mono', monospace;-webkit-text-stroke:0;">&nbsp;&nbsp;&nbsp;&nbsp;&nbsp;&nbsp;&nbsp;&nbsp;&nbsp;&nbsp;&nbsp;&nbsp;&nbsp;Customer&nbsp;Copy</div>
</div>
<div class="r" style="left:700.5px;top:807.5px;width:74.5px;height:24px;background:#0b95c9;border-right:1px solid #9ab;border-bottom:1px solid #9ab;box-sizing:border-box"></div>
<div class="t" style="left:737.5px;transform:translateX(-50%);top:812.50px;font-size:12px;line-height:15px;color:#fff;font-weight:normal;font-family:'Liberation Sans', sans-serif;">Print</div>
<div class="t" style="left:697.2px;top:836.50px;font-size:13px;line-height:17px;color:#000;font-weight:normal;font-family:'Liberation Sans', sans-serif;letter-spacing:-0.1px;">Selected Printer:</div>
<div class="r" style="left:800.6px;top:834.6px;width:234px;height:18.5px;background:#f0f0f0;border:1px solid #e0e0e0;box-sizing:border-box"></div>
<div class="r" style="left:802.3px;top:836.3px;width:212px;height:15px;background:#0078d7;outline:1px dotted #000;overflow:hidden">
<div class="t" style="left:-2px;top:1.00px;font-size:11px;line-height:14px;color:#fff;font-weight:normal;font-family:'Liberation Sans', sans-serif;letter-spacing:-0.2px;">Brother MFC-L2710DW series</div>
</div>
<div class="r" style="left:1015.5px;top:836.3px;width:16px;height:15px;background:#f4f4f4;border:1px solid #aaa;box-sizing:border-box"></div>
<svg class="r" style="left:1019px;top:841px" width="9" height="6"><path d="M0.5 0.5 H7.5 L4 4.5 Z" fill="#000"/></svg>
</body></html>
